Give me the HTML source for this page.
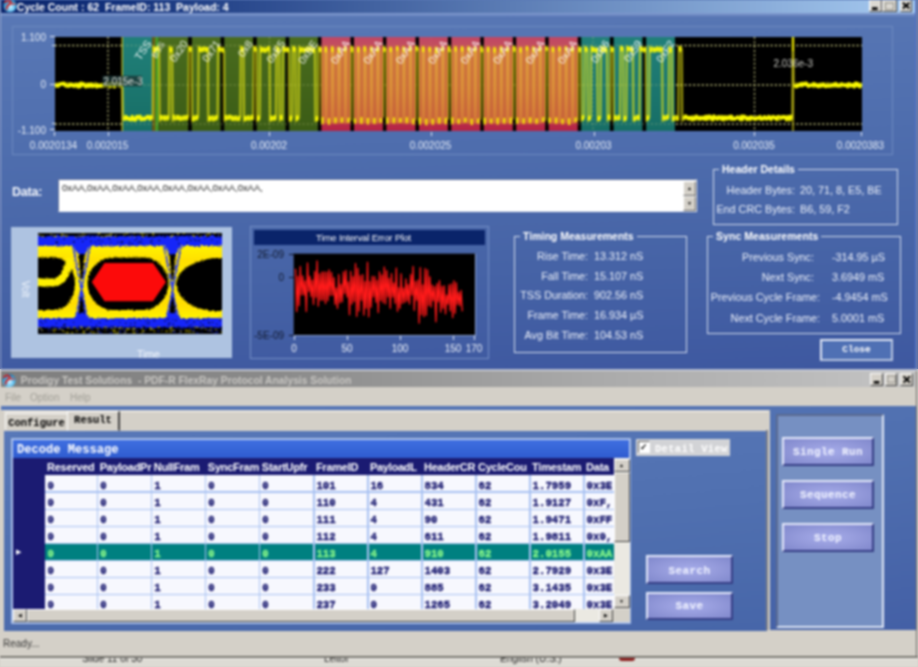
<!DOCTYPE html><html><head><meta charset="utf-8"><title>FlexRay</title><style>
*{box-sizing:border-box;margin:0;padding:0}
html,body{width:918px;height:667px;overflow:hidden;background:linear-gradient(#5a79b6 0px,#4059a0 369px,#d4d0c8 369px,#d4d0c8 667px);font-family:"Liberation Sans",sans-serif;}
div,span,fieldset{position:absolute;white-space:nowrap}
#all{left:0;top:0;width:918px;height:667px;overflow:hidden;filter:blur(1px)}
#top{left:0;top:0;width:918px;height:369px;background:linear-gradient(178deg,#5a79b6 0%,#4f6eae 38%,#4663a6 72%,#3e58a0 100%);}
#ttl{left:1.3px;top:0;width:913.7px;height:13.1px;background:linear-gradient(90deg,#0a246a 0%,#12307a 12%,#a6caf0 100%);}
#ttl span{left:15.5px;top:1px;font-size:10.5px;letter-spacing:0;font-weight:bold;color:#fff;line-height:13px;}
.wb{top:-1px;width:12px;height:13px;background:#dcd9d2;border:1px solid;border-color:#fff #404040 #404040 #fff;}
.lbl{color:#eef2fa;font-size:10.8px;line-height:12px}
.ax{color:#e6ecf6;font-size:10px;line-height:11px}
.gb{border:1.5px solid #d3dcec;min-width:0}
.gb>legend{margin-left:5px;font-size:10.5px;font-weight:bold;line-height:12px;color:#fff;padding:0 3px;}
.r{text-align:right}
</style></head><body><div id="all">
<div id="top">
<div style="left:0;top:0;width:1.3px;height:369px;background:#9aa8cc"></div>
<div style="left:914.8px;top:0;width:1.8px;height:369px;background:#5272c2"></div>
<div style="left:916.5px;top:0;width:1.5px;height:369px;background:#8c8c8c"></div>
<div id="ttl"><span>Cycle Count : 62&nbsp; FrameID: 113&nbsp; Payload: 4</span></div>
<div style="left:1.3px;top:13.1px;width:913.7px;height:4px;background:linear-gradient(rgba(150,172,220,0.75),rgba(150,172,220,0))"></div>
<svg style="position:absolute;left:2.5px;top:-2px" width="14" height="15" viewBox="0 0 14 15"><defs><radialGradient id="ig1" cx="0.55" cy="0.68" r="0.7"><stop offset="0" stop-color="#b8e8ff"/><stop offset="0.55" stop-color="#4cb6ea"/><stop offset="1" stop-color="#17679c"/></radialGradient></defs><circle cx="7" cy="7.5" r="6.6" fill="url(#ig1)"/><path d="M2.2 4.2 Q4.5 1.2 7.2 3.2 Q9 5 6 6.6 Q3.2 8 3.8 11" stroke="#cc2222" stroke-width="1.9" fill="none" stroke-linecap="round"/><path d="M5.5 5.2 L12.5 6.3" stroke="#d24848" stroke-width="1.5"/><path d="M6.5 8.5 Q8 7.5 9.5 9" stroke="#fff" stroke-width="1.2" fill="none" opacity="0.8"/></svg>
<div class="wb" style="left:869.0px;width:12.6px"></div>
<div class="wb" style="left:882.0px;width:14.8px"></div>
<div class="wb" style="left:899.8px;width:12.6px"></div>
<svg style="position:absolute;left:868px;top:0px" width="46" height="13"><rect x="4" y="7.2" width="5.6" height="2.8" fill="#000"/><rect x="17.5" y="3" width="8" height="6.5" fill="none" stroke="#9a9890" stroke-width="1.2"/><path d="M34.8 2.8 L41.4 8.6 M41.4 2.8 L34.8 8.6" stroke="#000" stroke-width="2"/></svg>
<div style="left:12px;top:25.6px;width:881px;height:129.4px;border:1px solid #6d8ac0"></div>
<svg style="position:absolute;left:55px;top:36.6px" width="807" height="94" viewBox="55 36 807 94">
<defs><linearGradient id="gg" x1="0" y1="0" x2="0" y2="1"><stop offset="0" stop-color="#4a6c1e"/><stop offset="1" stop-color="#3b5c16"/></linearGradient><linearGradient id="tg" x1="0" y1="0" x2="0" y2="1"><stop offset="0" stop-color="#218079"/><stop offset="1" stop-color="#176e66"/></linearGradient><linearGradient id="sg" x1="0" y1="0" x2="0" y2="1"><stop offset="0" stop-color="#e2a23c"/><stop offset="0.6" stop-color="#dc9238"/><stop offset="1" stop-color="#d47a38"/></linearGradient><linearGradient id="rg" x1="0" y1="0" x2="0" y2="1"><stop offset="0" stop-color="#bf4766"/><stop offset="0.1" stop-color="#c4505c"/><stop offset="0.17" stop-color="#cc6a42"/><stop offset="0.55" stop-color="#c8643e"/><stop offset="0.84" stop-color="#c4563e"/><stop offset="0.93" stop-color="#b82a48"/><stop offset="1" stop-color="#b42446"/></linearGradient></defs>
<rect x="55" y="36" width="807" height="94" fill="#000"/>
<rect x="122.3" y="36" width="30.0" height="94" fill="url(#tg)"/>
<rect x="152.3" y="36" width="2" height="94" fill="#7a5c12"/>
<rect x="154.2" y="36" width="4.4" height="94" fill="#5c7a20"/>
<rect x="156.6" y="36" width="1.2" height="94" fill="#30c030"/>
<rect x="158.6" y="36" width="29.5" height="94" fill="url(#gg)"/>
<rect x="191.9" y="36" width="28.7" height="94" fill="url(#gg)"/>
<rect x="224.3" y="36" width="28.7" height="94" fill="url(#gg)"/>
<rect x="256.8" y="36" width="28.7" height="94" fill="url(#gg)"/>
<rect x="289.2" y="36" width="28.7" height="94" fill="url(#gg)"/>
<rect x="321.6" y="36" width="28.7" height="94" fill="url(#rg)"/>
<rect x="354.1" y="36" width="28.7" height="94" fill="url(#rg)"/>
<rect x="386.6" y="36" width="28.7" height="94" fill="url(#rg)"/>
<rect x="419.0" y="36" width="28.7" height="94" fill="url(#rg)"/>
<rect x="451.5" y="36" width="28.7" height="94" fill="url(#rg)"/>
<rect x="483.9" y="36" width="28.7" height="94" fill="url(#rg)"/>
<rect x="516.4" y="36" width="28.7" height="94" fill="url(#rg)"/>
<rect x="548.8" y="36" width="28.7" height="94" fill="url(#rg)"/>
<rect x="581.2" y="36" width="28.7" height="94" fill="url(#tg)"/>
<rect x="613.7" y="36" width="28.7" height="94" fill="url(#tg)"/>
<rect x="646.2" y="36" width="28.7" height="94" fill="url(#tg)"/>
<line x1="55" x2="122" y1="44.5" y2="44.5" stroke="#dcdc90" stroke-width="1.3" stroke-dasharray="2 2.3" opacity="0.90"/>
<line x1="122" x2="676" y1="44.5" y2="44.5" stroke="#dcdc90" stroke-width="1.3" stroke-dasharray="2 2.3" opacity="0.28"/>
<line x1="676" x2="862" y1="44.5" y2="44.5" stroke="#dcdc90" stroke-width="1.3" stroke-dasharray="2 2.3" opacity="0.90"/>
<line x1="55" x2="122" y1="84.0" y2="84.0" stroke="#dcdc90" stroke-width="1.3" stroke-dasharray="2 2.3" opacity="0.90"/>
<line x1="122" x2="676" y1="84.0" y2="84.0" stroke="#dcdc90" stroke-width="1.3" stroke-dasharray="2 2.3" opacity="0.28"/>
<line x1="676" x2="862" y1="84.0" y2="84.0" stroke="#dcdc90" stroke-width="1.3" stroke-dasharray="2 2.3" opacity="0.90"/>
<line x1="55" x2="122" y1="123.0" y2="123.0" stroke="#dcdc90" stroke-width="1.3" stroke-dasharray="2 2.3" opacity="0.90"/>
<line x1="122" x2="676" y1="123.0" y2="123.0" stroke="#dcdc90" stroke-width="1.3" stroke-dasharray="2 2.3" opacity="0.28"/>
<line x1="676" x2="862" y1="123.0" y2="123.0" stroke="#dcdc90" stroke-width="1.3" stroke-dasharray="2 2.3" opacity="0.90"/>
<line y1="36" y2="130" x1="108.0" x2="108.0" stroke="#dcdc90" stroke-width="1.3" stroke-dasharray="2 2.3" opacity="0.85"/>
<line y1="36" y2="130" x1="269.5" x2="269.5" stroke="#dcdc90" stroke-width="1.3" stroke-dasharray="2 2.3" opacity="0.30"/>
<line y1="36" y2="130" x1="431.0" x2="431.0" stroke="#dcdc90" stroke-width="1.3" stroke-dasharray="2 2.3" opacity="0.30"/>
<line y1="36" y2="130" x1="593.0" x2="593.0" stroke="#dcdc90" stroke-width="1.3" stroke-dasharray="2 2.3" opacity="0.30"/>
<line y1="36" y2="130" x1="754.5" x2="754.5" stroke="#dcdc90" stroke-width="1.3" stroke-dasharray="2 2.3" opacity="0.85"/>
<path d="M55.0 83.3 L56.2 82.6 L57.4 84.6 L58.6 82.3 L59.8 84.1 L61.0 83.5 L62.2 82.2 L63.4 84.0 L64.6 82.1 L65.8 83.7 L67.0 82.3 L68.2 82.4 L69.4 83.7 L70.6 85.3 L71.8 82.5 L73.0 82.9 L74.2 84.5 L75.4 85.8 L76.6 84.3 L77.8 83.6 L79.0 85.9 L80.2 82.2 L81.4 85.4 L82.6 83.2 L83.8 82.6 L85.0 82.5 L86.2 83.2 L87.4 85.3 L88.6 82.7 L89.8 84.3 L91.0 84.6 L92.2 83.5 L93.4 84.2 L94.6 82.3 L95.8 82.2 L97.0 82.8 L98.2 84.7 L99.4 83.7 L100.6 83.3 L101.8 84.3 L103.0 83.8 L104.2 83.2 L105.4 85.2 L106.6 84.8 L107.8 83.0 L109.0 84.3 L110.2 84.1 L111.4 85.5 L112.6 84.9 L113.8 83.2 L115.0 85.9 L116.2 82.5 L117.4 83.7 L118.6 85.0 L119.8 82.6 L121.0 84.0 L122.2 82.2 L122.3 84.7 L122.9 118.2 L124.1 117.3 L125.3 118.7 L126.5 116.2 L127.7 117.9 L128.9 117.4 L130.1 117.4 L131.3 116.8 L132.5 118.5 L133.7 119.0 L134.9 116.9 L136.1 117.7 L137.3 115.1 L138.5 117.9 L139.7 117.6 L140.9 119.2 L142.1 118.4 L143.3 116.1 L144.5 116.5 L145.7 117.7 L146.9 114.9 L148.1 116.8 L149.3 115.5 L150.5 115.3 L151.7 115.1 L152.7 118.2 L153.2 45.5 L153.6 46.9 L154.6 47.4 L155.6 48.0 L155.9 50.1 L156.8 46.7 L157.8 48.3 L158.8 48.7 L159.1 50.2 L159.6 120.0 L160.0 118.4 L161.0 118.6 L162.0 116.0 L162.4 116.6 L163.3 116.4 L164.3 118.7 L165.3 119.0 L165.6 115.5 L166.5 115.6 L167.5 115.8 L168.5 115.8 L168.9 116.9 L169.4 45.5 L169.8 48.9 L170.8 47.5 L171.8 46.3 L172.1 48.1 L172.6 120.0 L173.0 116.4 L174.0 117.3 L175.0 119.0 L175.4 117.8 L176.3 117.1 L177.3 117.5 L178.3 117.8 L178.6 115.0 L179.5 118.8 L180.5 118.2 L181.5 118.6 L181.9 118.3 L182.8 116.5 L183.8 116.6 L184.8 115.3 L185.1 117.6 L186.0 115.1 L187.0 115.1 L188.0 115.7 L188.4 115.5 L188.8 45.5 L189.2 47.8 L190.2 46.5 L191.2 46.3 L191.6 47.0 L192.1 120.0 L192.5 115.2 L193.5 116.4 L194.5 114.9 L194.8 118.6 L195.7 117.5 L196.7 115.5 L197.7 115.9 L198.1 116.3 L198.6 45.5 L199.0 47.9 L200.0 46.8 L201.0 50.0 L201.3 50.7 L202.2 48.4 L203.2 48.4 L204.2 46.7 L204.6 46.7 L205.5 47.8 L206.5 47.5 L207.5 49.9 L207.8 47.0 L208.3 120.0 L208.7 114.9 L209.7 119.0 L210.7 117.1 L211.1 115.4 L212.0 117.2 L213.0 114.9 L214.0 117.1 L214.3 119.1 L215.2 118.6 L216.2 117.9 L217.2 115.9 L217.6 116.4 L218.1 45.5 L218.5 47.0 L219.5 49.7 L220.5 48.6 L220.8 49.7 L221.7 47.8 L222.7 47.3 L223.7 49.9 L224.0 50.6 L224.5 120.0 L224.9 118.6 L225.9 118.3 L226.9 118.4 L227.3 118.1 L228.2 115.8 L229.2 117.1 L230.2 116.4 L230.5 114.9 L231.4 114.9 L232.4 116.0 L233.4 115.9 L233.8 117.8 L234.7 119.0 L235.7 116.8 L236.7 118.9 L237.0 119.1 L237.9 119.0 L238.9 116.4 L239.9 115.8 L240.3 115.8 L240.8 45.5 L241.2 47.2 L242.2 47.2 L243.2 49.0 L243.5 50.3 L244.0 120.0 L244.4 118.5 L245.4 116.9 L246.4 117.7 L246.8 118.3 L247.7 115.2 L248.7 117.7 L249.7 118.8 L250.0 118.2 L250.9 118.1 L251.9 116.9 L252.9 115.6 L253.2 118.3 L253.8 45.5 L254.2 47.8 L255.2 49.8 L256.1 50.6 L256.5 48.0 L257.0 120.0 L257.4 116.6 L258.4 119.0 L259.4 118.0 L259.7 115.5 L260.2 45.5 L260.6 46.9 L261.6 47.0 L262.6 50.3 L263.0 49.8 L263.9 46.9 L264.9 49.9 L265.9 50.6 L266.2 49.2 L267.1 47.8 L268.1 48.7 L269.1 46.9 L269.5 46.4 L270.0 120.0 L270.4 119.1 L271.4 117.7 L272.4 117.1 L272.7 118.9 L273.6 116.7 L274.6 118.6 L275.6 118.4 L276.0 115.7 L276.5 45.5 L276.9 47.4 L277.9 47.6 L278.9 47.4 L279.2 48.9 L279.7 120.0 L280.1 115.9 L281.1 116.6 L282.1 115.4 L282.5 118.8 L283.0 45.5 L283.4 47.9 L284.4 48.3 L285.4 48.9 L285.7 50.3 L286.6 48.2 L287.6 50.3 L288.6 48.5 L288.9 48.6 L289.4 120.0 L289.8 117.1 L290.8 114.9 L291.8 116.7 L292.2 115.6 L292.7 45.5 L293.1 46.3 L294.1 49.8 L295.1 47.1 L295.4 48.4 L295.9 120.0 L296.3 118.0 L297.3 117.2 L298.3 116.2 L298.7 117.1 L299.2 45.5 L299.6 48.7 L300.6 49.8 L301.6 46.8 L301.9 48.8 L302.8 47.4 L303.8 47.5 L304.8 49.7 L305.2 48.5 L306.1 48.8 L307.1 49.6 L308.1 50.3 L308.4 48.3 L309.3 49.0 L310.3 48.5 L311.3 48.6 L311.7 49.3 L312.6 48.3 L313.6 48.6 L314.6 48.4 L314.9 50.4 L315.4 120.0 L315.8 117.9 L316.8 118.7 L317.8 118.9 L318.1 115.9 L318.6 45.5 L319.0 48.8 L320.0 50.5 L321.0 50.0 L321.4 46.9 L321.9 120.0 L322.3 115.3 L323.3 116.7 L324.3 115.1 L324.6 115.9 L325.1 45.5 L325.5 46.6 L326.5 49.2 L327.5 49.7 L327.9 50.2 L328.4 120.0 L328.8 115.5 L329.8 118.0 L330.8 117.7 L331.1 115.4 L331.6 45.5 L332.0 50.2 L333.0 50.6 L334.0 47.3 L334.4 50.5 L334.9 120.0 L335.3 116.6 L336.3 116.9 L337.3 119.2 L337.6 118.5 L338.1 45.5 L338.5 47.0 L339.5 48.2 L340.5 48.6 L340.9 47.8 L341.4 120.0 L341.8 115.7 L342.8 116.2 L343.8 118.0 L344.1 114.9 L344.6 45.5 L345.0 48.7 L346.0 48.2 L347.0 46.4 L347.4 47.8 L347.9 120.0 L348.3 117.5 L349.3 117.1 L350.3 115.1 L350.6 119.1 L351.1 45.5 L351.5 49.8 L352.5 50.6 L353.5 46.8 L353.8 47.5 L354.3 120.0 L354.7 115.0 L355.7 118.2 L356.7 116.0 L357.1 115.4 L357.6 45.5 L358.0 48.2 L359.0 50.3 L360.0 49.9 L360.3 47.4 L360.8 120.0 L361.2 115.5 L362.2 118.8 L363.2 117.3 L363.6 117.9 L364.1 45.5 L364.5 46.7 L365.5 46.6 L366.5 49.3 L366.8 48.2 L367.3 120.0 L367.7 115.1 L368.7 118.9 L369.7 117.6 L370.1 118.3 L370.6 45.5 L371.0 46.7 L372.0 50.1 L373.0 46.6 L373.3 50.1 L373.8 120.0 L374.2 116.8 L375.2 116.3 L376.2 117.2 L376.6 118.9 L377.1 45.5 L377.5 47.5 L378.5 46.9 L379.5 48.6 L379.8 47.3 L380.3 120.0 L380.7 115.3 L381.7 115.5 L382.7 115.0 L383.1 115.7 L383.6 45.5 L383.9 47.7 L384.9 47.6 L385.9 49.6 L386.3 47.6 L386.8 120.0 L387.2 117.0 L388.2 115.6 L389.2 116.3 L389.5 114.9 L390.0 45.5 L390.4 47.4 L391.4 46.4 L392.4 49.5 L392.8 48.7 L393.3 120.0 L393.7 115.6 L394.7 116.9 L395.7 118.9 L396.0 115.3 L396.5 45.5 L396.9 49.9 L397.9 48.2 L398.9 48.5 L399.3 50.0 L399.8 120.0 L400.2 116.5 L401.2 117.0 L402.2 117.8 L402.5 119.1 L403.0 45.5 L403.4 47.8 L404.4 50.0 L405.4 49.4 L405.8 49.1 L406.3 120.0 L406.7 116.6 L407.7 116.3 L408.7 115.0 L409.0 115.4 L409.5 45.5 L409.9 46.6 L410.9 49.6 L411.9 47.4 L412.3 47.0 L412.8 120.0 L413.2 115.2 L414.2 118.5 L415.2 118.6 L415.5 117.8 L416.0 45.5 L416.4 47.5 L417.4 47.4 L418.4 47.6 L418.7 48.3 L419.2 120.0 L419.6 115.5 L420.6 116.8 L421.6 116.0 L422.0 119.0 L422.5 45.5 L422.9 50.6 L423.9 48.7 L424.9 47.4 L425.2 50.5 L425.7 120.0 L426.1 116.2 L427.1 116.4 L428.1 114.8 L428.5 116.5 L429.0 45.5 L429.4 48.4 L430.4 48.5 L431.4 47.2 L431.7 48.5 L432.2 120.0 L432.6 114.8 L433.6 116.0 L434.6 115.2 L435.0 116.6 L435.5 45.5 L435.9 46.5 L436.9 46.4 L437.9 47.6 L438.2 47.3 L438.7 120.0 L439.1 117.4 L440.1 117.1 L441.1 118.1 L441.5 117.7 L442.0 45.5 L442.4 49.5 L443.4 50.2 L444.4 48.0 L444.7 47.7 L445.2 120.0 L445.6 119.1 L446.6 115.5 L447.6 118.0 L448.0 117.6 L448.5 45.5 L448.9 46.5 L449.9 50.0 L450.9 50.2 L451.2 49.1 L451.7 120.0 L452.1 118.0 L453.1 118.4 L454.1 115.4 L454.4 117.1 L454.9 45.5 L455.3 48.5 L456.3 50.0 L457.3 49.8 L457.7 49.9 L458.2 120.0 L458.6 117.4 L459.6 118.7 L460.6 117.8 L460.9 117.9 L461.4 45.5 L461.8 47.3 L462.8 46.4 L463.8 46.9 L464.2 47.9 L464.7 120.0 L465.1 115.3 L466.1 118.5 L467.1 117.3 L467.4 117.6 L467.9 45.5 L468.3 49.1 L469.3 49.3 L470.3 48.5 L470.7 46.3 L471.2 120.0 L471.6 118.3 L472.6 118.1 L473.6 117.0 L473.9 117.2 L474.4 45.5 L474.8 49.2 L475.8 46.6 L476.8 49.5 L477.2 47.4 L477.7 120.0 L478.1 115.1 L479.1 116.0 L480.1 118.0 L480.4 115.7 L480.9 45.5 L481.3 49.6 L482.3 50.6 L483.3 48.5 L483.6 48.0 L484.1 120.0 L484.5 116.9 L485.5 117.8 L486.5 118.2 L486.9 117.5 L487.4 45.5 L487.8 49.1 L488.8 46.6 L489.8 46.9 L490.1 47.4 L490.6 120.0 L491.0 118.1 L492.0 116.1 L493.0 117.3 L493.4 114.9 L493.9 45.5 L494.3 46.6 L495.3 47.5 L496.3 49.3 L496.6 49.3 L497.1 120.0 L497.5 117.8 L498.5 116.1 L499.5 117.1 L499.9 116.8 L500.4 45.5 L500.8 48.4 L501.8 46.8 L502.8 50.2 L503.1 47.2 L503.6 120.0 L504.0 119.1 L505.0 118.9 L506.0 114.9 L506.4 116.8 L506.9 45.5 L507.3 49.9 L508.3 50.6 L509.3 48.3 L509.6 47.5 L510.1 120.0 L510.5 115.7 L511.5 119.0 L512.5 115.7 L512.9 117.4 L513.4 45.5 L513.8 46.9 L514.8 48.6 L515.8 50.5 L516.1 46.9 L516.6 120.0 L517.0 118.4 L518.0 117.0 L519.0 118.7 L519.3 117.9 L519.8 45.5 L520.2 47.3 L521.2 50.2 L522.2 48.4 L522.6 46.4 L523.1 120.0 L523.5 114.8 L524.5 117.0 L525.5 116.8 L525.8 116.1 L526.3 45.5 L526.7 46.9 L527.7 47.8 L528.7 47.7 L529.1 50.0 L529.6 120.0 L530.0 114.8 L531.0 118.1 L532.0 118.5 L532.3 115.3 L532.8 45.5 L533.2 50.4 L534.2 49.4 L535.2 50.3 L535.6 47.6 L536.1 120.0 L536.5 116.4 L537.5 116.5 L538.5 119.2 L538.8 117.4 L539.3 45.5 L539.7 47.9 L540.7 48.2 L541.7 47.5 L542.1 46.5 L542.6 120.0 L543.0 115.2 L544.0 118.5 L545.0 116.1 L545.3 118.9 L545.8 45.5 L546.2 47.4 L547.2 47.5 L548.2 48.5 L548.5 47.1 L549.0 120.0 L549.4 116.4 L550.4 119.0 L551.4 118.7 L551.8 118.4 L552.3 45.5 L552.7 49.1 L553.7 50.3 L554.7 50.4 L555.0 48.7 L555.5 120.0 L555.9 118.0 L556.9 115.0 L557.9 118.0 L558.3 116.8 L558.8 45.5 L559.2 49.6 L560.2 49.1 L561.2 47.6 L561.5 46.5 L562.0 120.0 L562.4 118.9 L563.4 115.4 L564.4 116.9 L564.8 116.3 L565.3 45.5 L565.7 47.6 L566.7 49.6 L567.7 50.6 L568.0 47.4 L568.5 120.0 L568.9 117.7 L569.9 116.1 L570.9 117.3 L571.3 116.5 L571.8 45.5 L572.2 47.0 L573.2 47.0 L574.2 47.2 L574.5 50.3 L575.0 120.0 L575.4 117.0 L576.4 115.8 L577.4 118.8 L577.8 119.2 L578.2 45.5 L578.6 48.3 L579.6 46.9 L580.6 47.1 L581.0 46.7 L581.5 120.0 L581.9 116.3 L582.9 115.2 L583.9 115.9 L584.2 115.9 L584.7 45.5 L585.1 48.8 L586.1 50.2 L587.1 49.6 L587.5 48.1 L588.0 120.0 L588.4 116.6 L589.4 117.1 L590.4 116.5 L590.7 116.3 L591.2 45.5 L591.6 46.6 L592.6 47.5 L593.6 50.6 L594.0 46.9 L594.9 48.5 L595.9 49.1 L596.9 50.1 L597.2 47.3 L597.7 120.0 L598.1 116.0 L599.1 115.9 L600.1 116.6 L600.5 116.8 L601.0 45.5 L601.4 50.5 L602.4 50.0 L603.4 50.1 L603.7 46.4 L604.6 46.4 L605.6 49.4 L606.6 50.2 L607.0 48.4 L607.5 120.0 L607.9 117.4 L608.9 114.8 L609.9 116.5 L610.2 118.9 L610.7 45.5 L611.1 49.9 L612.1 50.1 L613.1 50.6 L613.4 47.4 L613.9 120.0 L614.3 115.3 L615.3 115.5 L616.3 117.1 L616.7 117.8 L617.6 118.9 L618.6 118.0 L619.6 117.6 L619.9 118.2 L620.4 45.5 L620.8 48.3 L621.8 48.7 L622.8 46.5 L623.2 49.7 L623.7 120.0 L624.1 115.8 L625.1 118.8 L626.1 117.6 L626.4 116.1 L626.9 45.5 L627.3 46.9 L628.3 47.4 L629.3 49.1 L629.7 49.4 L630.6 46.8 L631.6 46.6 L632.6 48.6 L632.9 48.9 L633.4 120.0 L633.8 116.5 L634.8 115.8 L635.8 117.4 L636.2 114.8 L637.1 116.1 L638.1 116.8 L639.1 119.0 L639.4 117.6 L639.9 45.5 L640.3 50.2 L641.3 48.4 L642.3 47.3 L642.6 47.4 L643.5 50.5 L644.5 49.4 L645.5 47.7 L645.9 46.4 L646.4 120.0 L646.8 117.0 L647.8 117.8 L648.8 116.6 L649.1 115.9 L649.6 45.5 L650.0 49.2 L651.0 50.4 L652.0 47.3 L652.4 46.5 L653.3 47.8 L654.3 48.2 L655.3 49.3 L655.6 47.2 L656.5 49.8 L657.5 49.6 L658.5 48.5 L658.9 47.2 L659.8 50.6 L660.8 47.7 L661.8 49.9 L662.1 47.3 L662.6 120.0 L663.0 115.8 L664.0 118.1 L665.0 116.1 L665.4 119.0 L666.3 117.0 L667.3 115.6 L668.3 115.8 L668.6 116.6 L669.1 45.5 L669.5 49.2 L670.5 50.5 L671.5 46.9 L671.9 48.0 L672.4 120.0 L672.8 115.7 L673.8 119.1 L674.8 115.4 L675.1 115.0 L676.0 115.1 L677.0 116.5 L678.0 118.8 L678.3 118.7 L678.8 45.5 L679.2 49.5 L680.2 50.7 L681.2 50.4 L681.6 47.7 L682.1 120.0 L682.6 115.7 L683.8 118.7 L685.0 118.0 L686.2 115.1 L687.4 117.7 L688.6 116.5 L689.8 116.5 L691.0 116.3 L692.2 115.7 L693.4 115.0 L694.6 116.1 L695.8 116.4 L697.0 118.8 L698.2 115.5 L699.4 118.9 L700.6 115.8 L701.8 116.4 L703.0 118.3 L704.2 118.3 L705.4 116.7 L706.6 115.2 L707.8 116.9 L709.0 116.5 L710.2 118.7 L711.4 115.8 L712.6 116.5 L713.8 118.6 L715.0 115.1 L716.2 116.6 L717.4 118.2 L718.6 118.1 L719.8 115.2 L721.0 115.1 L722.2 115.3 L723.4 118.7 L724.6 116.0 L725.8 118.0 L727.0 118.6 L728.2 116.4 L729.4 116.1 L730.6 118.8 L731.8 117.5 L733.0 116.0 L734.2 117.9 L735.4 116.3 L736.6 116.1 L737.8 115.0 L739.0 118.0 L740.2 118.7 L741.4 117.5 L742.6 118.8 L743.8 115.1 L745.0 115.9 L746.2 116.9 L747.4 118.8 L748.6 118.8 L749.8 116.5 L751.0 116.0 L752.2 116.7 L753.4 117.0 L754.6 118.7 L755.8 115.7 L757.0 118.2 L758.2 118.0 L759.4 118.3 L760.6 118.1 L761.8 117.4 L763.0 116.3 L764.2 116.3 L765.4 116.4 L766.6 118.1 L767.8 115.3 L769.0 115.8 L770.2 118.0 L771.4 116.0 L772.6 115.3 L773.8 115.1 L775.0 117.2 L776.2 116.3 L777.4 118.9 L778.6 118.5 L779.8 119.0 L781.0 116.1 L782.2 115.3 L783.4 115.4 L784.6 117.0 L785.8 117.8 L787.0 116.8 L788.2 115.9 L789.4 116.7 L790.6 117.5 L791.8 117.7 L792.5 118.0 L793.0 34.0 L793.5 80.0 L794.5 85.4 L795.7 84.7 L796.9 82.5 L798.1 85.4 L799.3 83.2 L800.5 84.3 L801.7 83.5 L802.9 85.0 L804.1 82.8 L805.3 83.0 L806.5 83.0 L807.7 82.6 L808.9 85.5 L810.1 84.3 L811.3 83.3 L812.5 83.6 L813.7 86.0 L814.9 84.0 L816.1 82.9 L817.3 85.2 L818.5 84.6 L819.7 86.0 L820.9 82.4 L822.1 83.9 L823.3 85.3 L824.5 85.4 L825.7 85.7 L826.9 82.2 L828.1 83.2 L829.3 82.5 L830.5 82.8 L831.7 85.9 L832.9 84.3 L834.1 85.7 L835.3 83.5 L836.5 85.5 L837.7 83.8 L838.9 83.0 L840.1 85.1 L841.3 85.8 L842.5 82.4 L843.7 84.4 L844.9 84.5 L846.1 82.9 L847.3 83.5 L848.5 82.6 L849.7 82.8 L850.9 83.0 L852.1 84.4 L853.3 84.6 L854.5 82.8 L855.7 82.0 L856.9 83.3 L858.1 84.7 L859.3 82.7 L860.5 83.2 L861.7 82.8 L862.0 85.2" fill="none" stroke="#e8e020" stroke-width="3.4" opacity="0.2" stroke-linejoin="round"/>
<path d="M55.0 83.3 L56.2 82.6 L57.4 84.6 L58.6 82.3 L59.8 84.1 L61.0 83.5 L62.2 82.2 L63.4 84.0 L64.6 82.1 L65.8 83.7 L67.0 82.3 L68.2 82.4 L69.4 83.7 L70.6 85.3 L71.8 82.5 L73.0 82.9 L74.2 84.5 L75.4 85.8 L76.6 84.3 L77.8 83.6 L79.0 85.9 L80.2 82.2 L81.4 85.4 L82.6 83.2 L83.8 82.6 L85.0 82.5 L86.2 83.2 L87.4 85.3 L88.6 82.7 L89.8 84.3 L91.0 84.6 L92.2 83.5 L93.4 84.2 L94.6 82.3 L95.8 82.2 L97.0 82.8 L98.2 84.7 L99.4 83.7 L100.6 83.3 L101.8 84.3 L103.0 83.8 L104.2 83.2 L105.4 85.2 L106.6 84.8 L107.8 83.0 L109.0 84.3 L110.2 84.1 L111.4 85.5 L112.6 84.9 L113.8 83.2 L115.0 85.9 L116.2 82.5 L117.4 83.7 L118.6 85.0 L119.8 82.6 L121.0 84.0 L122.2 82.2 L122.3 84.7 L122.9 118.2 L124.1 117.3 L125.3 118.7 L126.5 116.2 L127.7 117.9 L128.9 117.4 L130.1 117.4 L131.3 116.8 L132.5 118.5 L133.7 119.0 L134.9 116.9 L136.1 117.7 L137.3 115.1 L138.5 117.9 L139.7 117.6 L140.9 119.2 L142.1 118.4 L143.3 116.1 L144.5 116.5 L145.7 117.7 L146.9 114.9 L148.1 116.8 L149.3 115.5 L150.5 115.3 L151.7 115.1 L152.7 118.2 L153.2 45.5 L153.6 46.9 L154.6 47.4 L155.6 48.0 L155.9 50.1 L156.8 46.7 L157.8 48.3 L158.8 48.7 L159.1 50.2 L159.6 120.0 L160.0 118.4 L161.0 118.6 L162.0 116.0 L162.4 116.6 L163.3 116.4 L164.3 118.7 L165.3 119.0 L165.6 115.5 L166.5 115.6 L167.5 115.8 L168.5 115.8 L168.9 116.9 L169.4 45.5 L169.8 48.9 L170.8 47.5 L171.8 46.3 L172.1 48.1 L172.6 120.0 L173.0 116.4 L174.0 117.3 L175.0 119.0 L175.4 117.8 L176.3 117.1 L177.3 117.5 L178.3 117.8 L178.6 115.0 L179.5 118.8 L180.5 118.2 L181.5 118.6 L181.9 118.3 L182.8 116.5 L183.8 116.6 L184.8 115.3 L185.1 117.6 L186.0 115.1 L187.0 115.1 L188.0 115.7 L188.4 115.5 L188.8 45.5 L189.2 47.8 L190.2 46.5 L191.2 46.3 L191.6 47.0 L192.1 120.0 L192.5 115.2 L193.5 116.4 L194.5 114.9 L194.8 118.6 L195.7 117.5 L196.7 115.5 L197.7 115.9 L198.1 116.3 L198.6 45.5 L199.0 47.9 L200.0 46.8 L201.0 50.0 L201.3 50.7 L202.2 48.4 L203.2 48.4 L204.2 46.7 L204.6 46.7 L205.5 47.8 L206.5 47.5 L207.5 49.9 L207.8 47.0 L208.3 120.0 L208.7 114.9 L209.7 119.0 L210.7 117.1 L211.1 115.4 L212.0 117.2 L213.0 114.9 L214.0 117.1 L214.3 119.1 L215.2 118.6 L216.2 117.9 L217.2 115.9 L217.6 116.4 L218.1 45.5 L218.5 47.0 L219.5 49.7 L220.5 48.6 L220.8 49.7 L221.7 47.8 L222.7 47.3 L223.7 49.9 L224.0 50.6 L224.5 120.0 L224.9 118.6 L225.9 118.3 L226.9 118.4 L227.3 118.1 L228.2 115.8 L229.2 117.1 L230.2 116.4 L230.5 114.9 L231.4 114.9 L232.4 116.0 L233.4 115.9 L233.8 117.8 L234.7 119.0 L235.7 116.8 L236.7 118.9 L237.0 119.1 L237.9 119.0 L238.9 116.4 L239.9 115.8 L240.3 115.8 L240.8 45.5 L241.2 47.2 L242.2 47.2 L243.2 49.0 L243.5 50.3 L244.0 120.0 L244.4 118.5 L245.4 116.9 L246.4 117.7 L246.8 118.3 L247.7 115.2 L248.7 117.7 L249.7 118.8 L250.0 118.2 L250.9 118.1 L251.9 116.9 L252.9 115.6 L253.2 118.3 L253.8 45.5 L254.2 47.8 L255.2 49.8 L256.1 50.6 L256.5 48.0 L257.0 120.0 L257.4 116.6 L258.4 119.0 L259.4 118.0 L259.7 115.5 L260.2 45.5 L260.6 46.9 L261.6 47.0 L262.6 50.3 L263.0 49.8 L263.9 46.9 L264.9 49.9 L265.9 50.6 L266.2 49.2 L267.1 47.8 L268.1 48.7 L269.1 46.9 L269.5 46.4 L270.0 120.0 L270.4 119.1 L271.4 117.7 L272.4 117.1 L272.7 118.9 L273.6 116.7 L274.6 118.6 L275.6 118.4 L276.0 115.7 L276.5 45.5 L276.9 47.4 L277.9 47.6 L278.9 47.4 L279.2 48.9 L279.7 120.0 L280.1 115.9 L281.1 116.6 L282.1 115.4 L282.5 118.8 L283.0 45.5 L283.4 47.9 L284.4 48.3 L285.4 48.9 L285.7 50.3 L286.6 48.2 L287.6 50.3 L288.6 48.5 L288.9 48.6 L289.4 120.0 L289.8 117.1 L290.8 114.9 L291.8 116.7 L292.2 115.6 L292.7 45.5 L293.1 46.3 L294.1 49.8 L295.1 47.1 L295.4 48.4 L295.9 120.0 L296.3 118.0 L297.3 117.2 L298.3 116.2 L298.7 117.1 L299.2 45.5 L299.6 48.7 L300.6 49.8 L301.6 46.8 L301.9 48.8 L302.8 47.4 L303.8 47.5 L304.8 49.7 L305.2 48.5 L306.1 48.8 L307.1 49.6 L308.1 50.3 L308.4 48.3 L309.3 49.0 L310.3 48.5 L311.3 48.6 L311.7 49.3 L312.6 48.3 L313.6 48.6 L314.6 48.4 L314.9 50.4 L315.4 120.0 L315.8 117.9 L316.8 118.7 L317.8 118.9 L318.1 115.9 L318.6 45.5 L319.0 48.8 L320.0 50.5 L321.0 50.0 L321.4 46.9 L321.9 120.0 L322.3 115.3 L323.3 116.7 L324.3 115.1 L324.6 115.9 L325.1 45.5 L325.5 46.6 L326.5 49.2 L327.5 49.7 L327.9 50.2 L328.4 120.0 L328.8 115.5 L329.8 118.0 L330.8 117.7 L331.1 115.4 L331.6 45.5 L332.0 50.2 L333.0 50.6 L334.0 47.3 L334.4 50.5 L334.9 120.0 L335.3 116.6 L336.3 116.9 L337.3 119.2 L337.6 118.5 L338.1 45.5 L338.5 47.0 L339.5 48.2 L340.5 48.6 L340.9 47.8 L341.4 120.0 L341.8 115.7 L342.8 116.2 L343.8 118.0 L344.1 114.9 L344.6 45.5 L345.0 48.7 L346.0 48.2 L347.0 46.4 L347.4 47.8 L347.9 120.0 L348.3 117.5 L349.3 117.1 L350.3 115.1 L350.6 119.1 L351.1 45.5 L351.5 49.8 L352.5 50.6 L353.5 46.8 L353.8 47.5 L354.3 120.0 L354.7 115.0 L355.7 118.2 L356.7 116.0 L357.1 115.4 L357.6 45.5 L358.0 48.2 L359.0 50.3 L360.0 49.9 L360.3 47.4 L360.8 120.0 L361.2 115.5 L362.2 118.8 L363.2 117.3 L363.6 117.9 L364.1 45.5 L364.5 46.7 L365.5 46.6 L366.5 49.3 L366.8 48.2 L367.3 120.0 L367.7 115.1 L368.7 118.9 L369.7 117.6 L370.1 118.3 L370.6 45.5 L371.0 46.7 L372.0 50.1 L373.0 46.6 L373.3 50.1 L373.8 120.0 L374.2 116.8 L375.2 116.3 L376.2 117.2 L376.6 118.9 L377.1 45.5 L377.5 47.5 L378.5 46.9 L379.5 48.6 L379.8 47.3 L380.3 120.0 L380.7 115.3 L381.7 115.5 L382.7 115.0 L383.1 115.7 L383.6 45.5 L383.9 47.7 L384.9 47.6 L385.9 49.6 L386.3 47.6 L386.8 120.0 L387.2 117.0 L388.2 115.6 L389.2 116.3 L389.5 114.9 L390.0 45.5 L390.4 47.4 L391.4 46.4 L392.4 49.5 L392.8 48.7 L393.3 120.0 L393.7 115.6 L394.7 116.9 L395.7 118.9 L396.0 115.3 L396.5 45.5 L396.9 49.9 L397.9 48.2 L398.9 48.5 L399.3 50.0 L399.8 120.0 L400.2 116.5 L401.2 117.0 L402.2 117.8 L402.5 119.1 L403.0 45.5 L403.4 47.8 L404.4 50.0 L405.4 49.4 L405.8 49.1 L406.3 120.0 L406.7 116.6 L407.7 116.3 L408.7 115.0 L409.0 115.4 L409.5 45.5 L409.9 46.6 L410.9 49.6 L411.9 47.4 L412.3 47.0 L412.8 120.0 L413.2 115.2 L414.2 118.5 L415.2 118.6 L415.5 117.8 L416.0 45.5 L416.4 47.5 L417.4 47.4 L418.4 47.6 L418.7 48.3 L419.2 120.0 L419.6 115.5 L420.6 116.8 L421.6 116.0 L422.0 119.0 L422.5 45.5 L422.9 50.6 L423.9 48.7 L424.9 47.4 L425.2 50.5 L425.7 120.0 L426.1 116.2 L427.1 116.4 L428.1 114.8 L428.5 116.5 L429.0 45.5 L429.4 48.4 L430.4 48.5 L431.4 47.2 L431.7 48.5 L432.2 120.0 L432.6 114.8 L433.6 116.0 L434.6 115.2 L435.0 116.6 L435.5 45.5 L435.9 46.5 L436.9 46.4 L437.9 47.6 L438.2 47.3 L438.7 120.0 L439.1 117.4 L440.1 117.1 L441.1 118.1 L441.5 117.7 L442.0 45.5 L442.4 49.5 L443.4 50.2 L444.4 48.0 L444.7 47.7 L445.2 120.0 L445.6 119.1 L446.6 115.5 L447.6 118.0 L448.0 117.6 L448.5 45.5 L448.9 46.5 L449.9 50.0 L450.9 50.2 L451.2 49.1 L451.7 120.0 L452.1 118.0 L453.1 118.4 L454.1 115.4 L454.4 117.1 L454.9 45.5 L455.3 48.5 L456.3 50.0 L457.3 49.8 L457.7 49.9 L458.2 120.0 L458.6 117.4 L459.6 118.7 L460.6 117.8 L460.9 117.9 L461.4 45.5 L461.8 47.3 L462.8 46.4 L463.8 46.9 L464.2 47.9 L464.7 120.0 L465.1 115.3 L466.1 118.5 L467.1 117.3 L467.4 117.6 L467.9 45.5 L468.3 49.1 L469.3 49.3 L470.3 48.5 L470.7 46.3 L471.2 120.0 L471.6 118.3 L472.6 118.1 L473.6 117.0 L473.9 117.2 L474.4 45.5 L474.8 49.2 L475.8 46.6 L476.8 49.5 L477.2 47.4 L477.7 120.0 L478.1 115.1 L479.1 116.0 L480.1 118.0 L480.4 115.7 L480.9 45.5 L481.3 49.6 L482.3 50.6 L483.3 48.5 L483.6 48.0 L484.1 120.0 L484.5 116.9 L485.5 117.8 L486.5 118.2 L486.9 117.5 L487.4 45.5 L487.8 49.1 L488.8 46.6 L489.8 46.9 L490.1 47.4 L490.6 120.0 L491.0 118.1 L492.0 116.1 L493.0 117.3 L493.4 114.9 L493.9 45.5 L494.3 46.6 L495.3 47.5 L496.3 49.3 L496.6 49.3 L497.1 120.0 L497.5 117.8 L498.5 116.1 L499.5 117.1 L499.9 116.8 L500.4 45.5 L500.8 48.4 L501.8 46.8 L502.8 50.2 L503.1 47.2 L503.6 120.0 L504.0 119.1 L505.0 118.9 L506.0 114.9 L506.4 116.8 L506.9 45.5 L507.3 49.9 L508.3 50.6 L509.3 48.3 L509.6 47.5 L510.1 120.0 L510.5 115.7 L511.5 119.0 L512.5 115.7 L512.9 117.4 L513.4 45.5 L513.8 46.9 L514.8 48.6 L515.8 50.5 L516.1 46.9 L516.6 120.0 L517.0 118.4 L518.0 117.0 L519.0 118.7 L519.3 117.9 L519.8 45.5 L520.2 47.3 L521.2 50.2 L522.2 48.4 L522.6 46.4 L523.1 120.0 L523.5 114.8 L524.5 117.0 L525.5 116.8 L525.8 116.1 L526.3 45.5 L526.7 46.9 L527.7 47.8 L528.7 47.7 L529.1 50.0 L529.6 120.0 L530.0 114.8 L531.0 118.1 L532.0 118.5 L532.3 115.3 L532.8 45.5 L533.2 50.4 L534.2 49.4 L535.2 50.3 L535.6 47.6 L536.1 120.0 L536.5 116.4 L537.5 116.5 L538.5 119.2 L538.8 117.4 L539.3 45.5 L539.7 47.9 L540.7 48.2 L541.7 47.5 L542.1 46.5 L542.6 120.0 L543.0 115.2 L544.0 118.5 L545.0 116.1 L545.3 118.9 L545.8 45.5 L546.2 47.4 L547.2 47.5 L548.2 48.5 L548.5 47.1 L549.0 120.0 L549.4 116.4 L550.4 119.0 L551.4 118.7 L551.8 118.4 L552.3 45.5 L552.7 49.1 L553.7 50.3 L554.7 50.4 L555.0 48.7 L555.5 120.0 L555.9 118.0 L556.9 115.0 L557.9 118.0 L558.3 116.8 L558.8 45.5 L559.2 49.6 L560.2 49.1 L561.2 47.6 L561.5 46.5 L562.0 120.0 L562.4 118.9 L563.4 115.4 L564.4 116.9 L564.8 116.3 L565.3 45.5 L565.7 47.6 L566.7 49.6 L567.7 50.6 L568.0 47.4 L568.5 120.0 L568.9 117.7 L569.9 116.1 L570.9 117.3 L571.3 116.5 L571.8 45.5 L572.2 47.0 L573.2 47.0 L574.2 47.2 L574.5 50.3 L575.0 120.0 L575.4 117.0 L576.4 115.8 L577.4 118.8 L577.8 119.2 L578.2 45.5 L578.6 48.3 L579.6 46.9 L580.6 47.1 L581.0 46.7 L581.5 120.0 L581.9 116.3 L582.9 115.2 L583.9 115.9 L584.2 115.9 L584.7 45.5 L585.1 48.8 L586.1 50.2 L587.1 49.6 L587.5 48.1 L588.0 120.0 L588.4 116.6 L589.4 117.1 L590.4 116.5 L590.7 116.3 L591.2 45.5 L591.6 46.6 L592.6 47.5 L593.6 50.6 L594.0 46.9 L594.9 48.5 L595.9 49.1 L596.9 50.1 L597.2 47.3 L597.7 120.0 L598.1 116.0 L599.1 115.9 L600.1 116.6 L600.5 116.8 L601.0 45.5 L601.4 50.5 L602.4 50.0 L603.4 50.1 L603.7 46.4 L604.6 46.4 L605.6 49.4 L606.6 50.2 L607.0 48.4 L607.5 120.0 L607.9 117.4 L608.9 114.8 L609.9 116.5 L610.2 118.9 L610.7 45.5 L611.1 49.9 L612.1 50.1 L613.1 50.6 L613.4 47.4 L613.9 120.0 L614.3 115.3 L615.3 115.5 L616.3 117.1 L616.7 117.8 L617.6 118.9 L618.6 118.0 L619.6 117.6 L619.9 118.2 L620.4 45.5 L620.8 48.3 L621.8 48.7 L622.8 46.5 L623.2 49.7 L623.7 120.0 L624.1 115.8 L625.1 118.8 L626.1 117.6 L626.4 116.1 L626.9 45.5 L627.3 46.9 L628.3 47.4 L629.3 49.1 L629.7 49.4 L630.6 46.8 L631.6 46.6 L632.6 48.6 L632.9 48.9 L633.4 120.0 L633.8 116.5 L634.8 115.8 L635.8 117.4 L636.2 114.8 L637.1 116.1 L638.1 116.8 L639.1 119.0 L639.4 117.6 L639.9 45.5 L640.3 50.2 L641.3 48.4 L642.3 47.3 L642.6 47.4 L643.5 50.5 L644.5 49.4 L645.5 47.7 L645.9 46.4 L646.4 120.0 L646.8 117.0 L647.8 117.8 L648.8 116.6 L649.1 115.9 L649.6 45.5 L650.0 49.2 L651.0 50.4 L652.0 47.3 L652.4 46.5 L653.3 47.8 L654.3 48.2 L655.3 49.3 L655.6 47.2 L656.5 49.8 L657.5 49.6 L658.5 48.5 L658.9 47.2 L659.8 50.6 L660.8 47.7 L661.8 49.9 L662.1 47.3 L662.6 120.0 L663.0 115.8 L664.0 118.1 L665.0 116.1 L665.4 119.0 L666.3 117.0 L667.3 115.6 L668.3 115.8 L668.6 116.6 L669.1 45.5 L669.5 49.2 L670.5 50.5 L671.5 46.9 L671.9 48.0 L672.4 120.0 L672.8 115.7 L673.8 119.1 L674.8 115.4 L675.1 115.0 L676.0 115.1 L677.0 116.5 L678.0 118.8 L678.3 118.7 L678.8 45.5 L679.2 49.5 L680.2 50.7 L681.2 50.4 L681.6 47.7 L682.1 120.0 L682.6 115.7 L683.8 118.7 L685.0 118.0 L686.2 115.1 L687.4 117.7 L688.6 116.5 L689.8 116.5 L691.0 116.3 L692.2 115.7 L693.4 115.0 L694.6 116.1 L695.8 116.4 L697.0 118.8 L698.2 115.5 L699.4 118.9 L700.6 115.8 L701.8 116.4 L703.0 118.3 L704.2 118.3 L705.4 116.7 L706.6 115.2 L707.8 116.9 L709.0 116.5 L710.2 118.7 L711.4 115.8 L712.6 116.5 L713.8 118.6 L715.0 115.1 L716.2 116.6 L717.4 118.2 L718.6 118.1 L719.8 115.2 L721.0 115.1 L722.2 115.3 L723.4 118.7 L724.6 116.0 L725.8 118.0 L727.0 118.6 L728.2 116.4 L729.4 116.1 L730.6 118.8 L731.8 117.5 L733.0 116.0 L734.2 117.9 L735.4 116.3 L736.6 116.1 L737.8 115.0 L739.0 118.0 L740.2 118.7 L741.4 117.5 L742.6 118.8 L743.8 115.1 L745.0 115.9 L746.2 116.9 L747.4 118.8 L748.6 118.8 L749.8 116.5 L751.0 116.0 L752.2 116.7 L753.4 117.0 L754.6 118.7 L755.8 115.7 L757.0 118.2 L758.2 118.0 L759.4 118.3 L760.6 118.1 L761.8 117.4 L763.0 116.3 L764.2 116.3 L765.4 116.4 L766.6 118.1 L767.8 115.3 L769.0 115.8 L770.2 118.0 L771.4 116.0 L772.6 115.3 L773.8 115.1 L775.0 117.2 L776.2 116.3 L777.4 118.9 L778.6 118.5 L779.8 119.0 L781.0 116.1 L782.2 115.3 L783.4 115.4 L784.6 117.0 L785.8 117.8 L787.0 116.8 L788.2 115.9 L789.4 116.7 L790.6 117.5 L791.8 117.7 L792.5 118.0 L793.0 34.0 L793.5 80.0 L794.5 85.4 L795.7 84.7 L796.9 82.5 L798.1 85.4 L799.3 83.2 L800.5 84.3 L801.7 83.5 L802.9 85.0 L804.1 82.8 L805.3 83.0 L806.5 83.0 L807.7 82.6 L808.9 85.5 L810.1 84.3 L811.3 83.3 L812.5 83.6 L813.7 86.0 L814.9 84.0 L816.1 82.9 L817.3 85.2 L818.5 84.6 L819.7 86.0 L820.9 82.4 L822.1 83.9 L823.3 85.3 L824.5 85.4 L825.7 85.7 L826.9 82.2 L828.1 83.2 L829.3 82.5 L830.5 82.8 L831.7 85.9 L832.9 84.3 L834.1 85.7 L835.3 83.5 L836.5 85.5 L837.7 83.8 L838.9 83.0 L840.1 85.1 L841.3 85.8 L842.5 82.4 L843.7 84.4 L844.9 84.5 L846.1 82.9 L847.3 83.5 L848.5 82.6 L849.7 82.8 L850.9 83.0 L852.1 84.4 L853.3 84.6 L854.5 82.8 L855.7 82.0 L856.9 83.3 L858.1 84.7 L859.3 82.7 L860.5 83.2 L861.7 82.8 L862.0 85.2" fill="none" stroke="#f0ec10" stroke-width="1.7" opacity="0.6" stroke-linejoin="round"/>
<clipPath id="rc"><rect x="321.6" y="36" width="28.7" height="94"/><rect x="354.1" y="36" width="28.7" height="94"/><rect x="386.6" y="36" width="28.7" height="94"/><rect x="419.0" y="36" width="28.7" height="94"/><rect x="451.5" y="36" width="28.7" height="94"/><rect x="483.9" y="36" width="28.7" height="94"/><rect x="516.4" y="36" width="28.7" height="94"/><rect x="548.8" y="36" width="28.7" height="94"/></clipPath>
<rect x="321.6" y="36" width="28.7" height="94" fill="url(#rg)" opacity="0.8"/>
<rect x="354.1" y="36" width="28.7" height="94" fill="url(#rg)" opacity="0.8"/>
<rect x="386.6" y="36" width="28.7" height="94" fill="url(#rg)" opacity="0.8"/>
<rect x="419.0" y="36" width="28.7" height="94" fill="url(#rg)" opacity="0.8"/>
<rect x="451.5" y="36" width="28.7" height="94" fill="url(#rg)" opacity="0.8"/>
<rect x="483.9" y="36" width="28.7" height="94" fill="url(#rg)" opacity="0.8"/>
<rect x="516.4" y="36" width="28.7" height="94" fill="url(#rg)" opacity="0.8"/>
<rect x="548.8" y="36" width="28.7" height="94" fill="url(#rg)" opacity="0.8"/>
<path d="M319.47 46.5 v76 M325.96 46.5 v76 M332.45 46.5 v76 M338.94 46.5 v76 M345.43 46.5 v76 M351.92 46.5 v76 M358.41 46.5 v76 M364.90 46.5 v76 M371.39 46.5 v76 M377.88 46.5 v76 M384.37 46.5 v76 M390.86 46.5 v76 M397.35 46.5 v76 M403.84 46.5 v76 M410.33 46.5 v76 M416.82 46.5 v76 M423.31 46.5 v76 M429.80 46.5 v76 M436.29 46.5 v76 M442.78 46.5 v76 M449.27 46.5 v76 M455.76 46.5 v76 M462.25 46.5 v76 M468.74 46.5 v76 M475.23 46.5 v76 M481.72 46.5 v76 M488.21 46.5 v76 M494.70 46.5 v76 M501.19 46.5 v76 M507.68 46.5 v76 M514.17 46.5 v76 M520.66 46.5 v76 M527.15 46.5 v76 M533.64 46.5 v76 M540.13 46.5 v76 M546.62 46.5 v76 M553.11 46.5 v76 M559.60 46.5 v76 M566.09 46.5 v76 M572.58 46.5 v76" stroke="url(#sg)" stroke-width="3.0" fill="none" clip-path="url(#rc)" opacity="0.9"/>
<rect x="321.6" y="46.5" width="255.9" height="76" fill="#e29638" opacity="0.0"/>
<path d="M153.3 48.6 h2.7 M156.5 47.8 h2.7 M159.7 116.4 h2.7 M163.0 116.8 h2.7 M166.2 117.1 h2.7 M169.5 48.7 h2.7 M172.7 116.3 h2.7 M176.0 116.5 h2.7 M179.2 117.3 h2.7 M182.5 116.9 h2.7 M185.7 116.7 h2.7 M188.9 48.2 h2.7 M192.2 117.7 h2.7 M195.4 116.7 h2.7 M198.7 48.6 h2.7 M201.9 48.3 h2.7 M205.2 48.4 h2.7 M208.4 117.6 h2.7 M211.7 117.8 h2.7 M214.9 116.8 h2.7 M218.2 48.0 h2.7 M221.4 48.9 h2.7 M224.6 116.5 h2.7 M227.9 116.2 h2.7 M231.1 117.6 h2.7 M234.4 116.9 h2.7 M237.6 117.5 h2.7 M240.9 48.3 h2.7 M244.1 117.6 h2.7 M247.4 116.9 h2.7 M250.6 116.5 h2.7 M253.8 47.7 h2.7 M257.1 117.1 h2.7 M260.3 48.7 h2.7 M263.6 49.2 h2.7 M266.8 47.8 h2.7 M270.1 117.2 h2.7 M273.3 116.8 h2.7 M276.6 48.5 h2.7 M279.8 116.4 h2.7 M283.1 48.2 h2.7 M286.3 48.5 h2.7 M289.5 117.7 h2.7 M292.8 47.9 h2.7 M296.0 117.0 h2.7 M299.3 49.0 h2.7 M302.5 49.2 h2.7 M305.8 48.0 h2.7 M309.0 47.9 h2.7 M312.3 49.2 h2.7 M315.5 117.8 h2.7 M318.8 48.5 h2.7 M578.4 48.7 h2.7 M581.6 117.1 h2.7 M584.8 48.3 h2.7 M588.1 117.2 h2.7 M591.3 48.4 h2.7 M594.6 49.2 h2.7 M597.8 117.4 h2.7 M601.1 48.1 h2.7 M604.3 49.1 h2.7 M607.6 116.3 h2.7 M610.8 48.6 h2.7 M614.0 116.8 h2.7 M617.3 116.6 h2.7 M620.5 47.8 h2.7 M623.8 117.4 h2.7 M627.0 47.7 h2.7 M630.3 48.6 h2.7 M633.5 117.7 h2.7 M636.8 116.4 h2.7 M640.0 48.0 h2.7 M643.2 48.7 h2.7 M646.5 117.0 h2.7 M649.7 48.7 h2.7 M653.0 49.0 h2.7 M656.2 48.0 h2.7 M659.5 48.2 h2.7 M662.7 116.7 h2.7 M666.0 116.3 h2.7 M669.2 49.1 h2.7 M672.5 117.5 h2.7 M675.7 117.3 h2.7 M678.9 47.7 h2.7" stroke="#ffff00" stroke-width="5" fill="none" opacity="0.92"/>
<path d="M322.52 116.3 v6.9 M325.76 45.5 v5.8 M329.01 117.2 v6.6 M332.25 45.2 v5.7 M335.50 116.6 v5.8 M338.74 46.0 v5.7 M341.99 116.5 v5.4 M345.23 45.5 v5.2 M348.48 116.8 v5.2 M351.72 45.3 v5.6 M354.97 117.6 v5.1 M358.21 45.7 v5.6 M361.46 116.3 v6.7 M364.70 45.1 v5.4 M367.95 117.1 v6.3 M371.19 45.4 v5.1 M374.44 117.1 v5.9 M377.68 45.8 v5.1 M380.93 116.9 v5.0 M384.17 45.7 v5.2 M387.42 116.6 v6.5 M390.66 45.9 v5.1 M393.91 116.5 v5.9 M397.15 45.1 v4.6 M400.40 116.9 v5.2 M403.64 45.5 v5.2 M406.89 116.3 v6.3 M410.13 45.1 v5.6 M413.38 117.4 v6.0 M416.62 45.1 v5.2 M419.87 116.8 v6.9 M423.11 45.2 v5.8 M426.36 117.8 v6.5 M429.60 46.0 v4.7 M432.85 117.8 v6.0 M436.09 46.1 v5.9 M439.34 116.5 v6.6 M442.58 46.1 v4.5 M445.83 116.8 v6.5 M449.07 45.2 v5.8 M452.32 116.6 v6.6 M455.56 45.2 v5.2 M458.81 117.7 v5.4 M462.05 45.3 v5.2 M465.30 116.7 v5.1 M468.54 45.2 v4.7 M471.79 117.7 v6.4 M475.03 46.1 v4.7 M478.28 117.5 v5.2 M481.52 45.6 v5.4 M484.77 116.8 v6.7 M488.01 45.7 v5.3 M491.26 117.6 v5.2 M494.50 46.2 v5.4 M497.75 116.8 v6.6 M500.99 45.3 v6.0 M504.24 117.1 v5.7 M507.48 45.9 v5.1 M510.73 116.5 v6.5 M513.97 45.1 v5.7 M517.22 116.6 v6.3 M520.46 46.2 v5.3 M523.71 117.3 v5.6 M526.95 45.0 v4.5 M530.20 116.4 v6.2 M533.44 45.5 v5.2 M536.69 117.6 v5.3 M539.93 45.3 v5.4 M543.18 116.2 v5.0 M546.42 45.4 v4.6 M549.67 116.8 v5.4 M552.91 45.7 v5.3 M556.16 116.5 v6.2 M559.40 45.6 v4.6 M562.65 117.7 v5.5 M565.89 45.2 v4.6 M569.14 117.2 v6.7 M572.38 45.9 v5.0 M575.63 116.6 v5.0" stroke="#fbf800" stroke-width="2.4" fill="none" opacity="0.88"/>
<path d="M55.0 85.4 L56.1 85.0 L57.2 83.9 L58.3 85.0 L59.4 83.8 L60.5 82.9 L61.6 82.4 L62.7 82.9 L63.8 82.2 L64.9 83.3 L66.0 85.0 L67.1 84.8 L68.2 85.4 L69.3 84.8 L70.4 83.1 L71.5 84.2 L72.6 83.7 L73.7 85.2 L74.8 84.1 L75.9 83.1 L77.0 84.6 L78.1 85.9 L79.2 82.9 L80.3 85.5 L81.4 82.1 L82.5 83.0 L83.6 82.9 L84.7 85.0 L85.8 85.8 L86.9 85.0 L88.0 83.3 L89.1 85.5 L90.2 83.3 L91.3 83.0 L92.4 85.6 L93.5 84.5 L94.6 84.8 L95.7 84.7 L96.8 85.9 L97.9 83.9 L99.0 85.4 L100.1 84.8 L101.2 85.4 L102.3 83.7 L103.4 84.9 L104.5 84.3 L105.6 83.2 L106.7 82.8 L107.8 84.5 L108.9 82.3 L110.0 85.6 L111.1 82.6 L112.2 82.1 L113.3 82.4 L114.4 85.7 L115.5 83.4 L116.6 82.6 L117.7 82.1 L118.8 82.2 L119.9 84.8 L121.0 84.5 L121.5 84.0 M123.5 118.0 L124.6 118.1 L125.7 115.5 L126.8 117.6 L127.9 116.7 L129.0 118.5 L130.1 118.5 L131.2 118.8 L132.3 115.5 L133.4 118.7 L134.5 118.9 L135.6 119.0 L136.7 115.6 L137.8 116.0 L138.9 115.6 L140.0 115.3 L141.1 118.6 L142.2 118.4 L143.3 117.7 L144.4 118.5 L145.5 117.7 L146.6 116.3 L147.7 115.6 L148.8 115.6 L149.9 118.2 L151.0 116.0 L152.0 117.2 M683.1 116.3 L684.2 116.7 L685.3 115.1 L686.4 116.0 L687.5 116.1 L688.6 117.9 L689.7 116.5 L690.8 116.3 L691.9 118.9 L693.0 117.0 L694.1 118.4 L695.2 117.5 L696.3 115.1 L697.4 116.7 L698.5 116.7 L699.6 118.1 L700.7 116.4 L701.8 117.8 L702.9 117.2 L704.0 115.9 L705.1 118.4 L706.2 115.4 L707.3 118.3 L708.4 115.7 L709.5 115.0 L710.6 115.8 L711.7 118.0 L712.8 118.9 L713.9 115.0 L715.0 117.0 L716.1 117.0 L717.2 118.2 L718.3 115.7 L719.4 117.0 L720.5 116.4 L721.6 118.3 L722.7 116.0 L723.8 118.8 L724.9 116.1 L726.0 115.9 L727.1 117.8 L728.2 117.0 L729.3 115.4 L730.4 117.5 L731.5 115.3 L732.6 118.2 L733.7 117.8 L734.8 118.1 L735.9 117.5 L737.0 116.4 L738.1 116.6 L739.2 116.6 L740.3 118.6 L741.4 115.3 L742.5 118.6 L743.6 115.1 L744.7 115.8 L745.8 116.1 L746.9 118.6 L748.0 117.0 L749.1 116.5 L750.2 118.5 L751.3 115.9 L752.4 116.8 L753.5 117.1 L754.6 118.0 L755.7 118.0 L756.8 117.6 L757.9 116.4 L759.0 116.3 L760.1 115.6 L761.2 118.4 L762.3 117.6 L763.4 118.0 L764.5 115.7 L765.6 116.8 L766.7 118.1 L767.8 117.3 L768.9 115.5 L770.0 116.8 L771.1 118.5 L772.2 116.0 L773.3 115.8 L774.4 116.2 L775.5 117.8 L776.6 118.4 L777.7 115.6 L778.8 115.6 L779.9 116.0 L781.0 116.3 L782.1 117.1 L783.2 115.6 L784.3 116.3 L785.4 115.8 L786.5 118.9 L787.6 117.9 L788.7 115.4 L789.8 118.8 L790.9 115.4 L791.5 117.0 M795.0 83.5 L796.1 85.9 L797.2 85.2 L798.3 84.9 L799.4 83.7 L800.5 82.8 L801.6 84.6 L802.7 82.4 L803.8 82.8 L804.9 83.6 L806.0 82.1 L807.1 83.6 L808.2 85.2 L809.3 84.8 L810.4 84.0 L811.5 84.5 L812.6 83.9 L813.7 82.6 L814.8 84.4 L815.9 83.6 L817.0 85.0 L818.1 85.6 L819.2 83.7 L820.3 84.3 L821.4 85.0 L822.5 83.7 L823.6 82.9 L824.7 84.9 L825.8 85.5 L826.9 85.1 L828.0 84.8 L829.1 85.4 L830.2 84.7 L831.3 84.6 L832.4 83.8 L833.5 83.3 L834.6 84.5 L835.7 82.4 L836.8 83.7 L837.9 85.1 L839.0 84.9 L840.1 84.5 L841.2 83.0 L842.3 83.7 L843.4 83.8 L844.5 84.5 L845.6 83.6 L846.7 84.7 L847.8 85.7 L848.9 82.7 L850.0 84.6 L851.1 85.1 L852.2 83.6 L853.3 84.0 L854.4 85.9 L855.5 82.2 L856.6 84.2 L857.7 82.6 L858.8 85.1 L859.9 85.8 L861.0 84.1 L862.0 84.0" stroke="#ffff00" stroke-width="3.3" fill="none" opacity="0.95" stroke-linejoin="round"/>
<line x1="122.2" x2="122.2" y1="36" y2="130" stroke="#d8d020" stroke-width="1.2"/>
<line x1="793" x2="793" y1="36" y2="130" stroke="#c4bc1c" stroke-width="1.3"/>
<line x1="793" x2="793" y1="36" y2="50" stroke="#f4f000" stroke-width="1.8"/>
<g font-family="Liberation Sans, sans-serif" font-size="10.8" fill="#fff" opacity="0.9">
<text transform="translate(152,42.5) rotate(-56)" text-anchor="end">TSS</text>
<text transform="translate(165,43) rotate(-60)" text-anchor="end" font-size="8.5">BSS</text>
<text transform="translate(188.4,42.5) rotate(-56)" text-anchor="end">0x20</text>
<text transform="translate(220.9,42.5) rotate(-56)" text-anchor="end">0x71</text>
<text transform="translate(253.3,42.5) rotate(-56)" text-anchor="end">0x8</text>
<text transform="translate(285.8,42.5) rotate(-56)" text-anchor="end">0xE5</text>
<text transform="translate(318.2,42.5) rotate(-56)" text-anchor="end">0xBE</text>
<text transform="translate(350.6,42.5) rotate(-56)" text-anchor="end">0xAA</text>
<text transform="translate(383.1,42.5) rotate(-56)" text-anchor="end">0xAA</text>
<text transform="translate(415.6,42.5) rotate(-56)" text-anchor="end">0xAA</text>
<text transform="translate(448.0,42.5) rotate(-56)" text-anchor="end">0xAA</text>
<text transform="translate(480.5,42.5) rotate(-56)" text-anchor="end">0xAA</text>
<text transform="translate(512.9,42.5) rotate(-56)" text-anchor="end">0xAA</text>
<text transform="translate(545.4,42.5) rotate(-56)" text-anchor="end">0xAA</text>
<text transform="translate(577.8,42.5) rotate(-56)" text-anchor="end">0xAA</text>
<text transform="translate(610.2,42.5) rotate(-56)" text-anchor="end">0xB6</text>
<text transform="translate(642.7,42.5) rotate(-56)" text-anchor="end">0x59</text>
<text transform="translate(675.2,42.5) rotate(-56)" text-anchor="end">0xF2</text>
</g>
<rect x="102.5" y="74.8" width="39.5" height="10.6" fill="#1c3434" opacity="0.8"/>
<text x="103.3" y="83.8" font-family="Liberation Sans, sans-serif" font-size="10" fill="#f0f0e8" opacity="0.95">2.015e-3</text>
<text x="773.5" y="66" font-family="Liberation Sans, sans-serif" font-size="10" fill="#e8e8e0" opacity="0.85">2.036e-3</text>
</svg>
<div class="ax r" style="left:9px;width:37px;top:31.5px">1.100</div>
<div class="ax r" style="left:9px;width:37px;top:78.5px">0</div>
<div class="ax r" style="left:9px;width:37px;top:125.3px">-1.100</div>
<div style="left:50px;top:36.0px;width:5px;height:1px;background:#e6ecf6"></div>
<div style="left:52px;top:44.5px;width:3px;height:1px;background:#e6ecf6"></div>
<div style="left:50px;top:84.0px;width:5px;height:1px;background:#e6ecf6"></div>
<div style="left:52px;top:123.0px;width:3px;height:1px;background:#e6ecf6"></div>
<div style="left:50px;top:129.0px;width:5px;height:1px;background:#e6ecf6"></div>
<div class="ax" style="left:23.5px;width:60px;text-align:center;top:140px">0.0020134</div>
<div style="left:53.5px;top:131.6px;width:1px;height:4px;background:#e6ecf6"></div>
<div class="ax" style="left:77.5px;width:60px;text-align:center;top:140px">0.002015</div>
<div style="left:107.5px;top:131.6px;width:1px;height:4px;background:#e6ecf6"></div>
<div class="ax" style="left:239.0px;width:60px;text-align:center;top:140px">0.00202</div>
<div style="left:269.0px;top:131.6px;width:1px;height:4px;background:#e6ecf6"></div>
<div class="ax" style="left:400.5px;width:60px;text-align:center;top:140px">0.002025</div>
<div style="left:430.5px;top:131.6px;width:1px;height:4px;background:#e6ecf6"></div>
<div class="ax" style="left:563.5px;width:60px;text-align:center;top:140px">0.00203</div>
<div style="left:593.5px;top:131.6px;width:1px;height:4px;background:#e6ecf6"></div>
<div class="ax" style="left:724.0px;width:60px;text-align:center;top:140px">0.002035</div>
<div style="left:754.0px;top:131.6px;width:1px;height:4px;background:#e6ecf6"></div>
<div class="ax" style="left:830.5px;width:60px;text-align:center;top:140px">0.0020383</div>
<div style="left:860.5px;top:131.6px;width:1px;height:4px;background:#e6ecf6"></div>
<div style="left:12px;top:184.5px;font-size:12.5px;line-height:14px;color:#f4f6fb;font-weight:bold;letter-spacing:-0.2px">Data:</div>
<div style="left:58px;top:179px;width:639px;height:33px;background:#fff;border:1px solid;border-color:#6a7aa0 #e8ecf4 #e8ecf4 #6a7aa0"><span style="left:3px;top:3px;font-size:9.5px;line-height:10px;color:#222;letter-spacing:-0.05px">0xAA,0xAA,0xAA,0xAA,0xAA,0xAA,0xAA,0xAA,</span><div style="left:624px;top:1px;width:13px;height:15px;background:#d4d0c8;border:1px solid;border-color:#fff #606060 #606060 #fff;font-size:5px;line-height:12px;text-align:center;color:#000">▲</div><div style="left:624px;top:16px;width:13px;height:15px;background:#d4d0c8;border:1px solid;border-color:#fff #606060 #606060 #fff;font-size:5px;line-height:12px;text-align:center;color:#000">▼</div></div>
<fieldset class="gb" style="left:713px;top:163px;width:185px;height:62px"><legend>Header Details</legend></fieldset>
<div class="lbl r" style="left:715px;width:80px;top:184px">Header Bytes:</div><div class="lbl" style="left:800px;top:184px">20, 71, 8, E5, BE</div>
<div class="lbl r" style="left:715px;width:80px;top:203px">End CRC Bytes:</div><div class="lbl" style="left:800px;top:203px">B6, 59, F2</div>
<div style="left:11px;top:226.5px;width:220.5px;height:131.5px;background:#aec3e1"></div>
<svg style="position:absolute;left:38px;top:233px" width="184" height="101" viewBox="0 0 184 101">
<defs><filter id="rf" filterUnits="userSpaceOnUse" x="-10" y="-10" width="210" height="125"><feTurbulence type="fractalNoise" baseFrequency="0.6" numOctaves="2" seed="4"/><feDisplacementMap in="SourceGraphic" scale="4.5" xChannelSelector="R" yChannelSelector="G"/></filter><filter id="rf2" filterUnits="userSpaceOnUse" x="-10" y="-10" width="210" height="125"><feTurbulence type="fractalNoise" baseFrequency="0.7" numOctaves="2" seed="9"/><feDisplacementMap in="SourceGraphic" scale="3.5" xChannelSelector="G" yChannelSelector="R"/></filter><clipPath id="ec"><rect x="0" y="0" width="184" height="101"/></clipPath><linearGradient id="yg" x1="0" y1="0" x2="0" y2="1"><stop offset="0" stop-color="#fff200"/><stop offset="0.2" stop-color="#ffe000"/><stop offset="0.5" stop-color="#fff000"/><stop offset="0.8" stop-color="#ffdc00"/><stop offset="1" stop-color="#fff200"/></linearGradient></defs>
<rect width="184" height="101" fill="#000"/>
<g clip-path="url(#ec)">
<g filter="url(#rf)">
<rect x="-8" y="3" width="200" height="91.5" fill="#1428f8"/>
<rect x="-8" y="13" width="200" height="72" fill="url(#yg)"/>
<path d="M34.5 11 L52.5 11 L45.5 24 L41.5 24Z M34.5 87 L52.5 87 L45.5 76 L41.5 76Z" fill="#1428f8"/>
<path d="M125.5 11 L143.5 11 L136.5 24 L132.5 24Z M125.5 87 L143.5 87 L136.5 76 L132.5 76Z" fill="#1428f8"/>
</g>
<g filter="url(#rf2)">
<path d="M49.5 50 C49.5 37 61 24.5 74 24.5 H106 C119 24.5 130.5 37 130.5 50 C130.5 64 119 77 106 77 H74 C61 77 49.5 64 49.5 50Z" fill="#000"/>
<path d="M-6 24.5 H16 C29 24.5 37 38 37 50.5 C37 63 29 77 16 77 H-6Z" fill="#000"/>
<path d="M192 25 H178 C156 27 138.5 37 138.5 51 C138.5 65 154 76.5 176 78 H192Z" fill="#000"/>
<path d="M40.7 21 L46.7 21 L44.7 46 L42.7 46Z M42.7 57 L44.7 57 L46.7 80 L40.7 80Z" fill="#000"/>
<path d="M131.5 21 L137.5 21 L135.5 46 L133.5 46Z M133.5 57 L135.5 57 L137.5 80 L131.5 80Z" fill="#000"/>
<path d="M-6 49.5 H17 C25 49.5 29 38 33 25" stroke="#fff000" stroke-width="8" fill="none"/>
</g>
<path d="M35.0 13 L48.5 82 M52.0 13 L38.5 82" stroke="#2034ff" stroke-width="1.7" fill="none" filter="url(#rf2)"/>
<path d="M126.0 13 L139.5 82 M143.0 13 L129.5 82" stroke="#2034ff" stroke-width="1.7" fill="none" filter="url(#rf2)"/>
<path d="M83.2 95.2h1.3 M157.3 94.0h1.6 M145.9 2.8h1.4 M163.8 92.0h2.0 M120.3 7.5h1.8 M11.6 2.3h1.7 M60.0 7.3h1.6 M92.0 90.6h1.3 M101.4 86.8h1.2 M42.3 4.6h1.3 M155.8 5.5h1.1 M170.6 89.8h1.3 M104.2 92.7h0.9 M61.2 10.7h1.0 M130.1 90.6h1.0 M102.9 6.0h1.3 M70.6 5.6h1.1 M178.7 9.2h1.1 M72.5 9.7h0.9 M26.9 86.1h1.8 M71.1 2.7h0.8 M67.8 87.3h1.8 M25.0 92.3h1.9 M150.5 4.2h1.6 M71.4 6.3h0.9 M7.1 88.4h1.1 M151.6 7.4h1.9 M179.8 3.1h1.1 M168.8 86.2h1.3 M45.8 2.4h0.9 M25.5 6.1h1.5 M169.9 89.6h2.0 M3.9 90.8h1.2 M183.9 2.7h1.9 M135.6 93.9h1.2 M126.1 94.7h1.9 M5.6 86.1h1.3 M2.3 2.7h2.0 M161.9 89.9h1.3 M154.3 2.8h1.2 M16.1 2.2h1.4 M113.1 10.3h1.2 M26.4 91.2h1.6 M81.3 89.3h1.0 M79.3 9.3h1.3 M107.3 87.4h1.2 M164.8 86.6h1.8 M20.8 95.3h1.3 M95.7 93.2h1.2 M152.5 92.1h1.5 M56.9 9.1h1.3 M34.9 8.9h1.8 M181.1 87.1h2.0 M125.9 3.8h1.7 M138.9 6.8h1.1 M63.6 8.3h1.3 M145.7 86.9h1.0 M83.5 95.1h1.5 M120.1 94.2h1.4 M119.8 3.8h1.1 M165.6 95.8h1.1 M132.2 2.1h1.3 M101.3 8.9h1.1 M159.6 86.4h1.6 M168.5 96.0h1.9 M90.6 10.5h1.3 M102.8 9.5h1.4 M155.2 89.1h1.9 M160.1 7.5h2.0 M96.5 7.2h1.4 M111.4 95.7h1.5 M182.0 3.1h0.9 M99.1 95.6h1.1 M87.1 90.3h1.4 M20.0 86.3h1.0 M143.4 2.2h0.8 M52.3 88.4h0.9 M134.5 91.1h1.7 M129.1 86.2h1.8 M113.3 6.8h1.4 M156.6 7.5h1.9 M115.5 87.8h1.9 M35.8 9.0h1.0 M44.0 8.5h1.3 M173.2 6.9h1.3 M126.1 88.0h1.9 M178.2 91.1h1.4 M126.2 3.7h0.8 M140.2 95.1h1.0 M34.0 94.4h1.9 M17.5 95.5h0.9 M17.8 90.3h1.3 M110.6 2.1h1.0 M83.5 8.7h1.5 M17.4 9.1h1.8 M129.7 92.3h1.5 M35.1 89.4h1.1 M21.4 87.6h1.0 M60.7 89.7h1.7 M74.7 86.7h1.2 M18.6 10.0h1.1 M173.8 89.4h1.5 M98.1 5.5h1.6 M140.2 10.8h1.7 M47.2 5.6h1.6 M2.0 88.8h1.5 M93.4 10.7h1.6 M149.0 2.7h1.3 M172.7 95.7h1.5 M109.8 90.9h1.4 M110.0 88.9h1.5 M52.2 8.4h1.7 M107.8 90.1h0.9 M58.0 91.8h0.9 M166.6 5.9h0.9 M18.1 9.3h2.0 M150.3 87.2h1.3 M37.5 2.5h1.2 M25.7 92.0h1.2 M136.9 87.4h1.7 M43.9 94.9h1.1 M112.2 8.5h1.6 M138.6 3.7h1.9 M7.3 88.7h0.8 M7.0 4.0h1.9 M29.6 95.8h1.4 M38.8 5.1h1.8 M82.3 9.4h1.3 M137.5 5.5h1.6 M182.0 4.9h1.3 M67.9 2.9h1.5 M79.5 94.2h1.2 M142.7 2.7h1.6 M91.0 8.9h1.1 M120.9 95.1h1.7 M104.7 95.4h1.3 M147.8 89.2h2.0 M134.3 86.8h0.8 M124.6 94.0h1.8 M99.5 9.5h0.9 M83.6 9.7h1.4 M100.1 95.7h0.9 M100.6 9.1h1.1 M19.4 4.8h0.9 M150.2 93.1h1.7 M96.0 89.9h1.8 M61.3 3.2h1.6 M168.4 94.3h1.8 M148.3 9.5h1.4 M130.7 90.2h1.9" stroke="#000" stroke-width="1" fill="none" opacity="0.8"/>
<path d="M45.2 97.8h1.1 M78.2 99.8h2.0 M55.8 99.5h0.8 M88.5 95.9h1.2 M43.3 2.9h2.3 M74.1 97.8h1.6 M47.9 96.1h2.1 M17.0 3.5h2.2 M70.8 2.1h1.9 M43.7 0.0h2.0 M111.5 94.9h2.3 M149.0 97.7h1.7 M27.7 3.1h2.2 M15.2 98.3h2.0 M15.2 3.0h2.1 M76.7 3.7h0.9 M76.0 99.7h1.3 M14.0 96.8h0.9 M25.9 2.7h1.9 M2.3 95.4h1.0 M142.0 98.3h1.1 M115.5 98.5h1.7 M16.0 96.3h2.4 M103.6 2.9h1.0 M114.4 0.5h1.5 M154.0 2.4h2.5 M79.8 98.9h1.0 M37.8 98.1h1.9 M133.8 2.5h1.9 M112.0 96.1h1.6 M102.5 0.8h1.8 M29.1 99.4h1.8 M94.5 99.6h2.0 M172.2 2.3h1.0 M87.9 96.0h1.3 M162.5 95.4h1.7 M103.2 95.6h1.8 M22.6 3.3h2.1 M66.8 97.6h0.9 M33.1 99.6h2.1 M155.9 3.6h1.1 M75.8 97.2h1.1 M95.6 96.0h2.1 M132.8 3.2h1.6 M75.7 98.1h1.6 M183.0 99.1h1.0 M21.1 96.0h2.3 M59.0 99.4h1.4 M59.2 3.2h1.0 M82.2 94.3h1.0 M167.4 2.2h2.5 M134.5 97.3h2.2 M40.8 3.0h1.7 M23.9 97.5h1.2 M55.1 99.4h1.5 M65.6 94.3h1.3 M91.7 3.7h1.1 M158.1 94.4h2.3 M3.0 97.4h1.9 M35.2 94.6h2.2 M176.9 96.5h2.0 M172.6 94.5h1.0 M127.2 98.3h2.1 M68.5 2.6h2.5 M164.8 94.8h1.0 M180.9 1.8h0.8 M107.9 2.1h1.3 M139.0 1.0h2.1 M27.7 99.5h1.5 M171.0 97.3h2.3 M59.0 95.7h2.0 M95.8 3.8h1.0 M80.1 95.5h2.1 M43.4 95.3h1.2 M37.3 3.9h1.4 M111.9 97.0h1.2 M146.9 97.4h1.8 M132.9 96.6h1.3 M114.3 2.1h1.9 M93.9 97.0h2.2 M144.8 0.2h2.0 M176.1 0.5h1.0 M83.8 95.4h1.0 M72.3 1.2h2.0 M131.9 3.9h1.7 M44.5 99.6h2.4 M169.9 0.9h2.1 M104.4 3.6h1.6 M72.3 3.4h1.5 M45.4 98.8h1.2 M86.1 100.0h1.1 M89.6 96.5h1.4 M50.5 95.1h1.8 M119.5 94.3h2.4 M66.2 3.1h2.5 M154.3 99.1h2.1 M95.6 0.2h1.1 M94.6 95.3h1.7 M25.0 98.4h1.4 M161.9 3.3h1.5 M159.3 0.9h1.0 M156.1 94.1h1.3 M123.4 98.1h1.0 M142.6 98.7h1.0 M90.7 95.7h1.3 M29.2 95.0h2.0 M95.8 99.4h1.8 M129.1 98.2h1.0 M167.4 96.3h1.3 M132.3 94.4h2.3 M104.1 98.0h1.5 M62.8 3.6h2.1 M115.4 96.5h0.9 M85.4 1.8h2.0 M50.2 94.1h1.1 M42.0 94.0h2.5 M0.6 2.2h1.9 M103.2 99.8h1.0 M3.6 3.2h2.4 M151.7 96.9h1.3 M76.3 97.0h1.2 M59.8 0.7h2.5 M150.5 99.1h2.1 M88.4 0.7h1.4 M73.1 95.5h1.2 M131.7 98.6h2.2 M104.4 98.2h2.2 M23.0 1.5h2.5 M86.8 98.7h2.0 M77.2 2.5h0.9 M131.2 95.7h1.7 M147.5 99.4h1.1 M12.4 1.8h1.5 M113.7 96.3h1.2 M52.0 99.0h2.4 M46.3 2.0h1.3 M104.7 1.1h1.6 M67.3 94.3h1.9 M0.7 94.8h1.6 M76.3 94.3h1.8" stroke="#f0e000" stroke-width="1" fill="none" opacity="0.85"/>
<path d="M152.2 96.3h1.1 M53.5 96.2h2.2 M105.1 99.7h0.9 M157.7 99.7h1.7 M124.2 96.4h0.8 M102.3 95.3h1.6 M163.1 95.3h1.4 M141.1 96.3h1.2 M170.1 97.5h1.3 M97.8 98.3h2.2 M141.3 99.7h1.6 M154.5 97.0h2.3 M114.8 95.0h1.0 M59.5 98.6h1.7 M50.9 100.0h1.9 M82.8 96.6h0.9 M120.2 98.0h1.2 M39.3 95.9h0.9 M24.1 96.5h1.2 M63.9 95.8h1.4 M33.6 95.1h1.5 M9.6 95.5h2.4 M154.5 98.8h0.8 M32.1 95.3h1.8 M106.5 96.6h1.6 M172.7 97.5h2.1 M163.4 99.1h0.9 M71.8 99.6h2.3 M143.1 97.6h0.8 M134.4 98.3h2.3 M10.2 98.1h1.4 M80.9 98.6h1.5 M178.4 99.6h1.0 M135.9 98.7h1.5 M86.0 99.2h1.7 M69.1 97.7h0.9 M169.3 97.6h1.6 M52.3 95.2h0.9 M59.8 97.7h1.4 M47.1 98.1h1.1 M86.3 97.8h0.9 M178.1 98.8h2.3 M20.4 95.9h2.4 M145.3 95.7h1.0 M19.2 96.3h1.2 M34.0 95.2h1.4 M95.2 96.7h1.2 M2.6 97.1h1.6 M177.0 96.2h1.0 M81.0 98.8h2.3 M13.3 97.5h0.9 M160.1 99.9h0.9 M173.3 99.1h1.1 M61.4 99.6h2.4 M40.4 96.4h1.5 M113.0 95.2h2.0 M85.7 97.4h1.0 M119.4 97.7h1.3 M176.1 99.9h1.8 M183.0 96.9h2.2" stroke="#2030f0" stroke-width="1" fill="none" opacity="0.85"/>
</g>
<polygon points="53.8,49 66.5,30 115,30 128,49 115,68.2 66.5,68.2" fill="#fc0a0a"/>
</svg>
<div style="left:14px;top:283px;width:22px;height:12px;font-size:10px;line-height:12px;color:#eef3fb;transform:rotate(90deg);text-align:center">Volt</div>
<div style="left:137px;top:348px;font-size:10.5px;line-height:12px;color:#f4f7fc">Time</div>
<div style="left:250px;top:226px;width:239px;height:133px;border:1px solid #7590c6"></div>
<div style="left:254px;top:230px;width:231px;height:15px;background:#0a246a;color:#fff;font-size:9.5px;line-height:15px;text-align:center;letter-spacing:-0.1px;padding-right:12px">Time Interval Error Plot</div>
<svg style="position:absolute;left:294px;top:254px" width="181" height="81" viewBox="0 0 181 81">
<rect width="181" height="81" fill="#000"/>
<path d="M1.5 14.7 L2.7 57.5 L3.9 22.4 L5.1 51.6 L6.3 12.5 L7.5 41.0 L8.7 22.0 L9.9 40.9 L11.1 26.9 L12.3 57.4 L13.5 9.0 L14.7 37.4 L15.9 22.3 L17.1 42.4 L18.3 26.2 L19.5 50.3 L20.7 17.5 L21.9 43.2 L23.1 7.0 L24.3 52.1 L25.5 19.9 L26.7 46.2 L27.9 18.0 L29.1 46.2 L30.3 17.9 L31.5 49.5 L32.7 18.2 L33.9 46.6 L35.1 15.9 L36.3 41.5 L37.5 18.5 L38.7 41.3 L39.9 23.7 L41.1 50.3 L42.3 34.0 L43.5 54.3 L44.7 20.6 L45.9 48.8 L47.1 30.4 L48.3 47.8 L49.5 17.9 L50.7 39.5 L51.9 16.5 L53.1 42.9 L54.3 27.9 L55.5 60.7 L56.7 17.4 L57.9 50.0 L59.1 22.6 L60.3 47.4 L61.5 9.6 L62.7 62.3 L63.9 14.4 L65.1 56.9 L66.3 21.6 L67.5 46.2 L68.7 20.7 L69.9 60.9 L71.1 27.6 L72.3 54.2 L73.5 8.3 L74.7 62.7 L75.9 27.5 L77.1 53.2 L78.3 22.3 L79.5 42.8 L80.7 22.6 L81.9 48.1 L83.1 26.4 L84.3 58.4 L85.5 17.8 L86.7 46.4 L87.9 21.0 L89.1 48.7 L90.3 13.1 L91.5 49.8 L92.7 16.6 L93.9 42.8 L95.1 24.3 L96.3 54.2 L97.5 19.7 L98.7 43.0 L99.9 29.0 L101.1 49.2 L102.3 14.2 L103.5 57.2 L104.7 33.7 L105.9 54.2 L107.1 19.8 L108.3 49.4 L109.5 34.2 L110.7 48.4 L111.9 25.0 L113.1 47.0 L114.3 30.6 L115.5 49.9 L116.7 20.6 L117.9 41.0 L119.1 12.5 L120.3 56.3 L121.5 27.5 L122.7 46.1 L123.9 26.1 L125.1 69.1 L126.3 13.7 L127.5 60.6 L128.7 30.8 L129.9 62.6 L131.1 14.6 L132.3 61.2 L133.5 15.9 L134.7 51.5 L135.9 22.9 L137.1 52.9 L138.3 31.1 L139.5 46.6 L140.7 32.5 L141.9 67.7 L143.1 29.6 L144.3 47.6 L145.5 26.7 L146.7 58.0 L147.9 32.3 L149.1 54.3 L150.3 31.8 L151.5 59.8 L152.7 41.2 L153.9 50.2 L155.1 30.8 L156.3 56.8 L157.5 30.0 L158.7 63.5 L159.9 26.9 L161.1 59.2 L162.3 28.8 L163.5 50.5 L164.7 38.4 L165.9 51.6 L167.1 36.5 L168.3 57.3" fill="none" stroke="#c80808" stroke-width="2.0" opacity="0.22" stroke-linejoin="round"/>
<path d="M1.5 14.7 L2.7 57.5 L3.9 22.4 L5.1 51.6 L6.3 12.5 L7.5 41.0 L8.7 22.0 L9.9 40.9 L11.1 26.9 L12.3 57.4 L13.5 9.0 L14.7 37.4 L15.9 22.3 L17.1 42.4 L18.3 26.2 L19.5 50.3 L20.7 17.5 L21.9 43.2 L23.1 7.0 L24.3 52.1 L25.5 19.9 L26.7 46.2 L27.9 18.0 L29.1 46.2 L30.3 17.9 L31.5 49.5 L32.7 18.2 L33.9 46.6 L35.1 15.9 L36.3 41.5 L37.5 18.5 L38.7 41.3 L39.9 23.7 L41.1 50.3 L42.3 34.0 L43.5 54.3 L44.7 20.6 L45.9 48.8 L47.1 30.4 L48.3 47.8 L49.5 17.9 L50.7 39.5 L51.9 16.5 L53.1 42.9 L54.3 27.9 L55.5 60.7 L56.7 17.4 L57.9 50.0 L59.1 22.6 L60.3 47.4 L61.5 9.6 L62.7 62.3 L63.9 14.4 L65.1 56.9 L66.3 21.6 L67.5 46.2 L68.7 20.7 L69.9 60.9 L71.1 27.6 L72.3 54.2 L73.5 8.3 L74.7 62.7 L75.9 27.5 L77.1 53.2 L78.3 22.3 L79.5 42.8 L80.7 22.6 L81.9 48.1 L83.1 26.4 L84.3 58.4 L85.5 17.8 L86.7 46.4 L87.9 21.0 L89.1 48.7 L90.3 13.1 L91.5 49.8 L92.7 16.6 L93.9 42.8 L95.1 24.3 L96.3 54.2 L97.5 19.7 L98.7 43.0 L99.9 29.0 L101.1 49.2 L102.3 14.2 L103.5 57.2 L104.7 33.7 L105.9 54.2 L107.1 19.8 L108.3 49.4 L109.5 34.2 L110.7 48.4 L111.9 25.0 L113.1 47.0 L114.3 30.6 L115.5 49.9 L116.7 20.6 L117.9 41.0 L119.1 12.5 L120.3 56.3 L121.5 27.5 L122.7 46.1 L123.9 26.1 L125.1 69.1 L126.3 13.7 L127.5 60.6 L128.7 30.8 L129.9 62.6 L131.1 14.6 L132.3 61.2 L133.5 15.9 L134.7 51.5 L135.9 22.9 L137.1 52.9 L138.3 31.1 L139.5 46.6 L140.7 32.5 L141.9 67.7 L143.1 29.6 L144.3 47.6 L145.5 26.7 L146.7 58.0 L147.9 32.3 L149.1 54.3 L150.3 31.8 L151.5 59.8 L152.7 41.2 L153.9 50.2 L155.1 30.8 L156.3 56.8 L157.5 30.0 L158.7 63.5 L159.9 26.9 L161.1 59.2 L162.3 28.8 L163.5 50.5 L164.7 38.4 L165.9 51.6 L167.1 36.5 L168.3 57.3" fill="none" stroke="#ff1a1a" stroke-width="1.25" opacity="1" stroke-linejoin="round"/>
</svg>
<div style="left:293px;top:253px;width:183px;height:83px;border:1px solid #8fa6d6;border-left-color:#30406a;border-top-color:#30406a;background:none"></div>
<div class="r" style="left:247px;width:37px;top:249px;font-size:10px;line-height:11px;color:#10182c">2E-09</div>
<div style="left:289px;top:254px;width:5px;height:1px;background:#10182c"></div>
<div class="r" style="left:247px;width:37px;top:272px;font-size:10px;line-height:11px;color:#10182c">0</div>
<div style="left:289px;top:277px;width:5px;height:1px;background:#10182c"></div>
<div class="r" style="left:247px;width:37px;top:330px;font-size:10px;line-height:11px;color:#10182c">-5E-09</div>
<div style="left:289px;top:335px;width:5px;height:1px;background:#10182c"></div>
<div style="left:279px;width:30px;text-align:center;top:343px;font-size:10px;line-height:11px;color:#f0f4fa">0</div>
<div style="left:294px;top:336px;width:1px;height:4px;background:#e6ecf6"></div>
<div style="left:332px;width:30px;text-align:center;top:343px;font-size:10px;line-height:11px;color:#f0f4fa">50</div>
<div style="left:347px;top:336px;width:1px;height:4px;background:#e6ecf6"></div>
<div style="left:385px;width:30px;text-align:center;top:343px;font-size:10px;line-height:11px;color:#f0f4fa">100</div>
<div style="left:400px;top:336px;width:1px;height:4px;background:#e6ecf6"></div>
<div style="left:438px;width:30px;text-align:center;top:343px;font-size:10px;line-height:11px;color:#f0f4fa">150</div>
<div style="left:453px;top:336px;width:1px;height:4px;background:#e6ecf6"></div>
<div style="left:459px;width:30px;text-align:center;top:343px;font-size:10px;line-height:11px;color:#f0f4fa">170</div>
<div style="left:474px;top:336px;width:1px;height:4px;background:#e6ecf6"></div>
<fieldset class="gb" style="left:514px;top:230px;width:173px;height:123px"><legend>Timing Measurements</legend></fieldset>
<div class="lbl r" style="left:510px;width:78px;top:250.0px">Rise Time:</div><div class="lbl" style="left:594px;top:250.0px">13.312 nS</div>
<div class="lbl r" style="left:510px;width:78px;top:269.7px">Fall Time:</div><div class="lbl" style="left:594px;top:269.7px">15.107 nS</div>
<div class="lbl r" style="left:510px;width:78px;top:289.4px">TSS Duration:</div><div class="lbl" style="left:594px;top:289.4px">902.56 nS</div>
<div class="lbl r" style="left:510px;width:78px;top:309.1px">Frame Time:</div><div class="lbl" style="left:594px;top:309.1px">16.934 µS</div>
<div class="lbl r" style="left:510px;width:78px;top:328.8px">Avg Bit Time:</div><div class="lbl" style="left:594px;top:328.8px">104.53 nS</div>
<fieldset class="gb" style="left:707px;top:230px;width:194px;height:104px"><legend style="letter-spacing:0.05px">Sync Measurements</legend></fieldset>
<div class="lbl r" style="left:694px;width:120px;top:251.0px">Previous Sync:</div><div class="lbl" style="left:832px;top:251.0px">-314.95 µS</div>
<div class="lbl r" style="left:694px;width:120px;top:271.2px">Next Sync:</div><div class="lbl" style="left:832px;top:271.2px">3.6949 mS</div>
<div class="lbl r" style="left:700px;width:120px;top:291.4px">Previous Cycle Frame:</div><div class="lbl" style="left:832px;top:291.4px">-4.9454 mS</div>
<div class="lbl r" style="left:700px;width:120px;top:311.6px">Next Cycle Frame:</div><div class="lbl" style="left:832px;top:311.6px">5.0001 mS</div>
<div style="left:820px;top:339px;width:73px;height:22px;background:#4f70b4;border:2px solid;border-color:#dfe6f4 #b6c4e0 #b6c4e0 #dfe6f4;color:#fff;font-family:'Liberation Mono',monospace;font-weight:bold;font-size:9.5px;line-height:18px;text-align:center">Close</div>
</div>
<style>
#bw{left:0;top:366px;width:918px;height:301px;clip-path:inset(3px 0 0 0);background:#d4d0c8}
.mono{font-family:"Liberation Mono",monospace;font-weight:bold}
.btn{background:radial-gradient(ellipse at 50% 50%,#a6acea 0%,#969cdc 45%,#8088cc 100%);border:2px solid;border-color:#e4e8fa #353d84 #353d84 #e4e8fa;color:#f2f4ff;font-family:"Liberation Mono",monospace;font-weight:bold;font-size:11px;text-align:center;letter-spacing:0.4px}
.hc{height:18px;color:#fff;font-size:11px;font-weight:bold;line-height:17px;letter-spacing:-0.25px;overflow:hidden}
.c{height:17px;font-family:"Liberation Mono",monospace;font-weight:bold;font-size:10.7px;line-height:20px;color:#14146c;-webkit-text-stroke:0.35px #14146c;overflow:hidden}
.sb{background:#d4d0c8;border:1px solid;border-color:#fff #404040 #404040 #fff}
</style>
<div id="bw">
<div style="left:0;top:3px;width:918px;height:2px;background:linear-gradient(#8f9cc0,#e8e6e0)"></div>
<div style="left:1.3px;top:5.3px;width:914.7px;height:16.2px;background:linear-gradient(90deg,#7e7e7e 0%,#8a8a8a 30%,#aaaaaa 65%,#c4c4c4 100%)"><span style="left:19.5px;top:0;font-size:10.3px;font-weight:bold;color:#c8c6c2;line-height:19px">Prodigy Test Solutions&nbsp; - PDF-R FlexRay Protocol Analysis Solution</span></div>
<svg style="position:absolute;left:2.3px;top:6.5px" width="14" height="15" viewBox="0 0 14 15"><defs><radialGradient id="ig2" cx="0.55" cy="0.68" r="0.7"><stop offset="0" stop-color="#b8e8ff"/><stop offset="0.55" stop-color="#4cb6ea"/><stop offset="1" stop-color="#17679c"/></radialGradient></defs><circle cx="7" cy="7.5" r="6.6" fill="url(#ig2)"/><path d="M2.2 4.2 Q4.5 1.2 7.2 3.2 Q9 5 6 6.6 Q3.2 8 3.8 11" stroke="#cc2222" stroke-width="1.9" fill="none" stroke-linecap="round"/><path d="M5.5 5.2 L12.5 6.3" stroke="#d24848" stroke-width="1.5"/><path d="M6.5 8.5 Q8 7.5 9.5 9" stroke="#fff" stroke-width="1.2" fill="none" opacity="0.8"/></svg>
<div class="sb" style="left:870.0px;top:7.3px;width:13.2px;height:13px"></div>
<div class="sb" style="left:884.6px;top:7.3px;width:12.8px;height:13px"></div>
<div class="sb" style="left:899.8px;top:7.3px;width:13.7px;height:13px"></div>
<svg style="position:absolute;left:869px;top:7.3px" width="46" height="13"><rect x="4.8" y="8" width="5.6" height="2.6" fill="#000"/><rect x="18.6" y="3" width="7.5" height="6.5" fill="none" stroke="#a09e98" stroke-width="1.2"/><path d="M34.6 3.4 L41 9.6 M41 3.4 L34.6 9.6" stroke="#000" stroke-width="2"/></svg>
<div style="left:916.2px;top:5px;width:1.3px;height:286px;background:#6a6864"></div>
<div style="left:5px;top:23px;font-size:10px;line-height:17px;color:#a09e96">File</div><div style="left:30px;top:23px;font-size:10px;line-height:17px;color:#a09e96">Option</div><div style="left:70px;top:23px;font-size:10px;line-height:17px;color:#a09e96">Help</div>
<div style="left:1.3px;top:40.4px;width:914.7px;height:224px;background:linear-gradient(170deg,#5777b8 0%,#5070b0 50%,#4460a6 100%)"></div>
<div style="left:0;top:43.6px;width:770px;height:220.6px;background:#d4d0c8"></div>
<div style="left:3.5px;top:45px;width:764px;height:1px;background:#f4f2ee"></div>
<div style="left:5px;top:47px;width:63px;height:17px;border:1px solid;border-color:#fff #808080 #d4d0c8 #fff;font-size:10.5px;line-height:18px;text-align:center" class="mono">Configure</div>
<div style="left:67px;top:45px;width:53px;height:20px;border:1px solid;border-color:#fff #404040 #d4d0c8 #fff;border-right-width:2px;background:#d4d0c8;font-size:10.5px;line-height:16px;text-align:center" class="mono">Result</div>
<div style="left:3.6px;top:64.5px;width:763px;height:200px;background:linear-gradient(175deg,#5878b8 0%,#5070b0 50%,#4766a9 100%)"></div>
<div style="left:766px;top:64px;width:2px;height:200px;background:#7a7e88"></div>
<div style="left:12px;top:73px;width:618px;height:184px;background:#fff;border:1px solid #b9cbee;box-shadow:0 0 0 1px #9fb6e4"></div>
<div style="left:13px;top:74px;width:616px;height:18px;background:linear-gradient(#3f6fe0,#2f5cd0)"><span class="mono" style="left:4px;top:0;color:#fff;font-size:12.1px;line-height:20px;">Decode Message</span></div>
<div style="left:13px;top:92px;width:601px;height:18px;background:#1b1b72"></div>
<div style="left:13px;top:92px;width:32px;height:152px;background:#1b1b72"></div>
<div class="hc" style="left:47.0px;width:52.0px;top:93px">Reserved</div>
<div class="hc" style="left:99.7px;width:52.0px;top:93px">PayloadPr</div>
<div class="hc" style="left:153.8px;width:52.0px;top:93px">NullFram</div>
<div class="hc" style="left:207.8px;width:52.0px;top:93px">SyncFram</div>
<div class="hc" style="left:261.8px;width:52.0px;top:93px">StartUpfr</div>
<div class="hc" style="left:315.9px;width:52.0px;top:93px">FrameID</div>
<div class="hc" style="left:369.9px;width:52.0px;top:93px">PayloadL</div>
<div class="hc" style="left:424.0px;width:52.0px;top:93px">HeaderCR</div>
<div class="hc" style="left:478.0px;width:52.0px;top:93px">CycleCou</div>
<div class="hc" style="left:532.1px;width:52.0px;top:93px">Timestam</div>
<div class="hc" style="left:586.1px;width:28.9px;top:93px">Data</div>
<div style="left:45px;top:109px;width:568.5px;height:134px;background:#f7f8fe;overflow:hidden">
<div class="c" style="left:2.5px;top:0.5px;width:51.0px;">0</div>
<div class="c" style="left:55.2px;top:0.5px;width:51.0px;">0</div>
<div class="c" style="left:109.2px;top:0.5px;width:51.0px;">1</div>
<div class="c" style="left:163.3px;top:0.5px;width:51.0px;">0</div>
<div class="c" style="left:217.3px;top:0.5px;width:51.0px;">0</div>
<div class="c" style="left:271.4px;top:0.5px;width:51.0px;">101</div>
<div class="c" style="left:325.4px;top:0.5px;width:51.0px;">16</div>
<div class="c" style="left:379.5px;top:0.5px;width:51.0px;">834</div>
<div class="c" style="left:433.5px;top:0.5px;width:51.0px;">62</div>
<div class="c" style="left:487.6px;top:0.5px;width:51.0px;">1.7959</div>
<div class="c" style="left:541.6px;top:0.5px;width:27.9px;">0x3E</div>
<div style="left:0;top:16.4px;width:570px;height:1.4px;background:#a9c2f2"></div>
<div class="c" style="left:2.5px;top:17.6px;width:51.0px;">0</div>
<div class="c" style="left:55.2px;top:17.6px;width:51.0px;">0</div>
<div class="c" style="left:109.2px;top:17.6px;width:51.0px;">1</div>
<div class="c" style="left:163.3px;top:17.6px;width:51.0px;">0</div>
<div class="c" style="left:217.3px;top:17.6px;width:51.0px;">0</div>
<div class="c" style="left:271.4px;top:17.6px;width:51.0px;">110</div>
<div class="c" style="left:325.4px;top:17.6px;width:51.0px;">4</div>
<div class="c" style="left:379.5px;top:17.6px;width:51.0px;">431</div>
<div class="c" style="left:433.5px;top:17.6px;width:51.0px;">62</div>
<div class="c" style="left:487.6px;top:17.6px;width:51.0px;">1.9127</div>
<div class="c" style="left:541.6px;top:17.6px;width:27.9px;">0xF,</div>
<div style="left:0;top:33.5px;width:570px;height:1.4px;background:#a9c2f2"></div>
<div class="c" style="left:2.5px;top:34.7px;width:51.0px;">0</div>
<div class="c" style="left:55.2px;top:34.7px;width:51.0px;">0</div>
<div class="c" style="left:109.2px;top:34.7px;width:51.0px;">1</div>
<div class="c" style="left:163.3px;top:34.7px;width:51.0px;">0</div>
<div class="c" style="left:217.3px;top:34.7px;width:51.0px;">0</div>
<div class="c" style="left:271.4px;top:34.7px;width:51.0px;">111</div>
<div class="c" style="left:325.4px;top:34.7px;width:51.0px;">4</div>
<div class="c" style="left:379.5px;top:34.7px;width:51.0px;">90</div>
<div class="c" style="left:433.5px;top:34.7px;width:51.0px;">62</div>
<div class="c" style="left:487.6px;top:34.7px;width:51.0px;">1.9471</div>
<div class="c" style="left:541.6px;top:34.7px;width:27.9px;">0xFF</div>
<div style="left:0;top:50.6px;width:570px;height:1.4px;background:#a9c2f2"></div>
<div class="c" style="left:2.5px;top:51.8px;width:51.0px;">0</div>
<div class="c" style="left:55.2px;top:51.8px;width:51.0px;">0</div>
<div class="c" style="left:109.2px;top:51.8px;width:51.0px;">1</div>
<div class="c" style="left:163.3px;top:51.8px;width:51.0px;">0</div>
<div class="c" style="left:217.3px;top:51.8px;width:51.0px;">0</div>
<div class="c" style="left:271.4px;top:51.8px;width:51.0px;">112</div>
<div class="c" style="left:325.4px;top:51.8px;width:51.0px;">4</div>
<div class="c" style="left:379.5px;top:51.8px;width:51.0px;">611</div>
<div class="c" style="left:433.5px;top:51.8px;width:51.0px;">62</div>
<div class="c" style="left:487.6px;top:51.8px;width:51.0px;">1.9811</div>
<div class="c" style="left:541.6px;top:51.8px;width:27.9px;">0x0,</div>
<div style="left:0;top:67.7px;width:570px;height:1.4px;background:#a9c2f2"></div>
<div style="left:0;top:68.9px;width:570px;height:17px;background:#008080"></div>
<div class="c" style="left:2.5px;top:68.9px;width:51.0px;color:#86f58a;-webkit-text-stroke-color:#86f58a;">0</div>
<div class="c" style="left:55.2px;top:68.9px;width:51.0px;color:#86f58a;-webkit-text-stroke-color:#86f58a;">0</div>
<div class="c" style="left:109.2px;top:68.9px;width:51.0px;color:#86f58a;-webkit-text-stroke-color:#86f58a;">1</div>
<div class="c" style="left:163.3px;top:68.9px;width:51.0px;color:#86f58a;-webkit-text-stroke-color:#86f58a;">0</div>
<div class="c" style="left:217.3px;top:68.9px;width:51.0px;color:#86f58a;-webkit-text-stroke-color:#86f58a;">0</div>
<div class="c" style="left:271.4px;top:68.9px;width:51.0px;color:#86f58a;-webkit-text-stroke-color:#86f58a;">113</div>
<div class="c" style="left:325.4px;top:68.9px;width:51.0px;color:#86f58a;-webkit-text-stroke-color:#86f58a;">4</div>
<div class="c" style="left:379.5px;top:68.9px;width:51.0px;color:#86f58a;-webkit-text-stroke-color:#86f58a;">910</div>
<div class="c" style="left:433.5px;top:68.9px;width:51.0px;color:#86f58a;-webkit-text-stroke-color:#86f58a;">62</div>
<div class="c" style="left:487.6px;top:68.9px;width:51.0px;color:#86f58a;-webkit-text-stroke-color:#86f58a;">2.0155</div>
<div class="c" style="left:541.6px;top:68.9px;width:27.9px;color:#86f58a;-webkit-text-stroke-color:#86f58a;">0xAA</div>
<div style="left:0;top:84.8px;width:570px;height:1.4px;background:#a9c2f2"></div>
<div class="c" style="left:2.5px;top:86.0px;width:51.0px;">0</div>
<div class="c" style="left:55.2px;top:86.0px;width:51.0px;">0</div>
<div class="c" style="left:109.2px;top:86.0px;width:51.0px;">1</div>
<div class="c" style="left:163.3px;top:86.0px;width:51.0px;">0</div>
<div class="c" style="left:217.3px;top:86.0px;width:51.0px;">0</div>
<div class="c" style="left:271.4px;top:86.0px;width:51.0px;">222</div>
<div class="c" style="left:325.4px;top:86.0px;width:51.0px;">127</div>
<div class="c" style="left:379.5px;top:86.0px;width:51.0px;">1403</div>
<div class="c" style="left:433.5px;top:86.0px;width:51.0px;">62</div>
<div class="c" style="left:487.6px;top:86.0px;width:51.0px;">2.7929</div>
<div class="c" style="left:541.6px;top:86.0px;width:27.9px;">0x3E</div>
<div style="left:0;top:101.9px;width:570px;height:1.4px;background:#a9c2f2"></div>
<div class="c" style="left:2.5px;top:103.1px;width:51.0px;">0</div>
<div class="c" style="left:55.2px;top:103.1px;width:51.0px;">0</div>
<div class="c" style="left:109.2px;top:103.1px;width:51.0px;">1</div>
<div class="c" style="left:163.3px;top:103.1px;width:51.0px;">0</div>
<div class="c" style="left:217.3px;top:103.1px;width:51.0px;">0</div>
<div class="c" style="left:271.4px;top:103.1px;width:51.0px;">233</div>
<div class="c" style="left:325.4px;top:103.1px;width:51.0px;">0</div>
<div class="c" style="left:379.5px;top:103.1px;width:51.0px;">885</div>
<div class="c" style="left:433.5px;top:103.1px;width:51.0px;">62</div>
<div class="c" style="left:487.6px;top:103.1px;width:51.0px;">3.1435</div>
<div class="c" style="left:541.6px;top:103.1px;width:27.9px;">0x3E</div>
<div style="left:0;top:119.0px;width:570px;height:1.4px;background:#a9c2f2"></div>
<div class="c" style="left:2.5px;top:120.2px;width:51.0px;">0</div>
<div class="c" style="left:55.2px;top:120.2px;width:51.0px;">0</div>
<div class="c" style="left:109.2px;top:120.2px;width:51.0px;">1</div>
<div class="c" style="left:163.3px;top:120.2px;width:51.0px;">0</div>
<div class="c" style="left:217.3px;top:120.2px;width:51.0px;">0</div>
<div class="c" style="left:271.4px;top:120.2px;width:51.0px;">237</div>
<div class="c" style="left:325.4px;top:120.2px;width:51.0px;">0</div>
<div class="c" style="left:379.5px;top:120.2px;width:51.0px;">1265</div>
<div class="c" style="left:433.5px;top:120.2px;width:51.0px;">62</div>
<div class="c" style="left:487.6px;top:120.2px;width:51.0px;">3.2049</div>
<div class="c" style="left:541.6px;top:120.2px;width:27.9px;">0x3E</div>
<div style="left:0;top:136.1px;width:570px;height:1.4px;background:#a9c2f2"></div>
<div style="left:52.0px;top:0;width:1.4px;height:134px;background:#a9c2f2"></div>
<div style="left:106.0px;top:0;width:1.4px;height:134px;background:#a9c2f2"></div>
<div style="left:160.1px;top:0;width:1.4px;height:134px;background:#a9c2f2"></div>
<div style="left:214.1px;top:0;width:1.4px;height:134px;background:#a9c2f2"></div>
<div style="left:268.2px;top:0;width:1.4px;height:134px;background:#a9c2f2"></div>
<div style="left:322.2px;top:0;width:1.4px;height:134px;background:#a9c2f2"></div>
<div style="left:376.3px;top:0;width:1.4px;height:134px;background:#a9c2f2"></div>
<div style="left:430.3px;top:0;width:1.4px;height:134px;background:#a9c2f2"></div>
<div style="left:484.4px;top:0;width:1.4px;height:134px;background:#a9c2f2"></div>
<div style="left:538.4px;top:0;width:1.4px;height:134px;background:#a9c2f2"></div>
</div>
<div style="left:16px;top:181px;font-size:7px;line-height:9px;color:#fff">▶</div>
<div style="left:613.5px;top:92px;width:16px;height:151px;background:#ebe9e2"></div>
<div class="sb" style="left:613.5px;top:93px;width:16px;height:13px;font-size:5px;line-height:10px;text-align:center">▲</div>
<div class="sb" style="left:613.5px;top:106px;width:16px;height:70px"></div>
<div class="sb" style="left:613.5px;top:229px;width:16px;height:13px;font-size:5px;line-height:10px;text-align:center">▼</div>
<div style="left:13px;top:243px;width:616px;height:13px;background:#ebe9e2"></div>
<div class="sb" style="left:13px;top:243px;width:14px;height:13px;font-size:5px;line-height:10px;text-align:center">◀</div>
<div class="sb" style="left:27px;top:243px;width:548px;height:13px"></div>
<div class="sb" style="left:598.5px;top:243px;width:14px;height:13px;font-size:5px;line-height:10px;text-align:center">▶</div>
<div style="left:612.5px;top:243px;width:17px;height:13px;background:#d4d0c8"></div>
<div style="left:636px;top:73px;width:94px;height:17px;background:#d2d3d6"><div style="left:2px;top:2px;width:12px;height:12px;background:#fff;border:1px solid;border-color:#606060 #fff #fff #606060;font-size:9px;line-height:10px;color:#000;text-align:center;font-weight:bold">✓</div><span class="mono" style="left:19px;top:0;font-size:10.5px;line-height:20px;color:#fff;letter-spacing:0.3px">Detail View</span></div>
<div class="btn" style="left:646px;top:189px;width:87px;height:29px;line-height:28px">Search</div>
<div class="btn" style="left:646px;top:226px;width:87px;height:28px;line-height:25px">Save</div>
<div style="left:776px;top:48px;width:108px;height:214px;background:#7690c2;border:2px solid;border-color:#5a6a90 #dfe6f4 #dfe6f4 #5a6a90"></div>
<div class="btn" style="left:782px;top:71px;width:92px;height:29px;line-height:27px">Single Run</div>
<div class="btn" style="left:782px;top:114px;width:92px;height:29px;line-height:27px">Sequence</div>
<div class="btn" style="left:782px;top:157px;width:92px;height:29px;line-height:27px">Stop</div>
<div style="left:3px;top:271px;font-size:10px;line-height:14px;color:#383838">Ready...</div>
<div style="left:0;top:290.0px;width:918px;height:1.6px;background:#77756f"></div>
<div style="left:0;top:291.6px;width:918px;height:10px;background:#dddbd4;overflow:hidden"><div style="left:0;top:0;width:918px;height:1px;background:#f2f1ed"></div><span style="left:82px;top:-5px;font-size:10px;line-height:11px;color:#2a2a2a">Slide 11 of 30</span><span style="left:324px;top:-5px;font-size:10px;line-height:11px;color:#2a2a2a">Leitor</span><span style="left:500px;top:-5px;font-size:10px;line-height:11px;color:#2a2a2a">English (U.S.)</span><span style="left:619px;top:0px;width:16px;height:3px;background:#8a1c1c;border-radius:0 0 3px 3px"></span></div>
</div>
</div></body></html>
